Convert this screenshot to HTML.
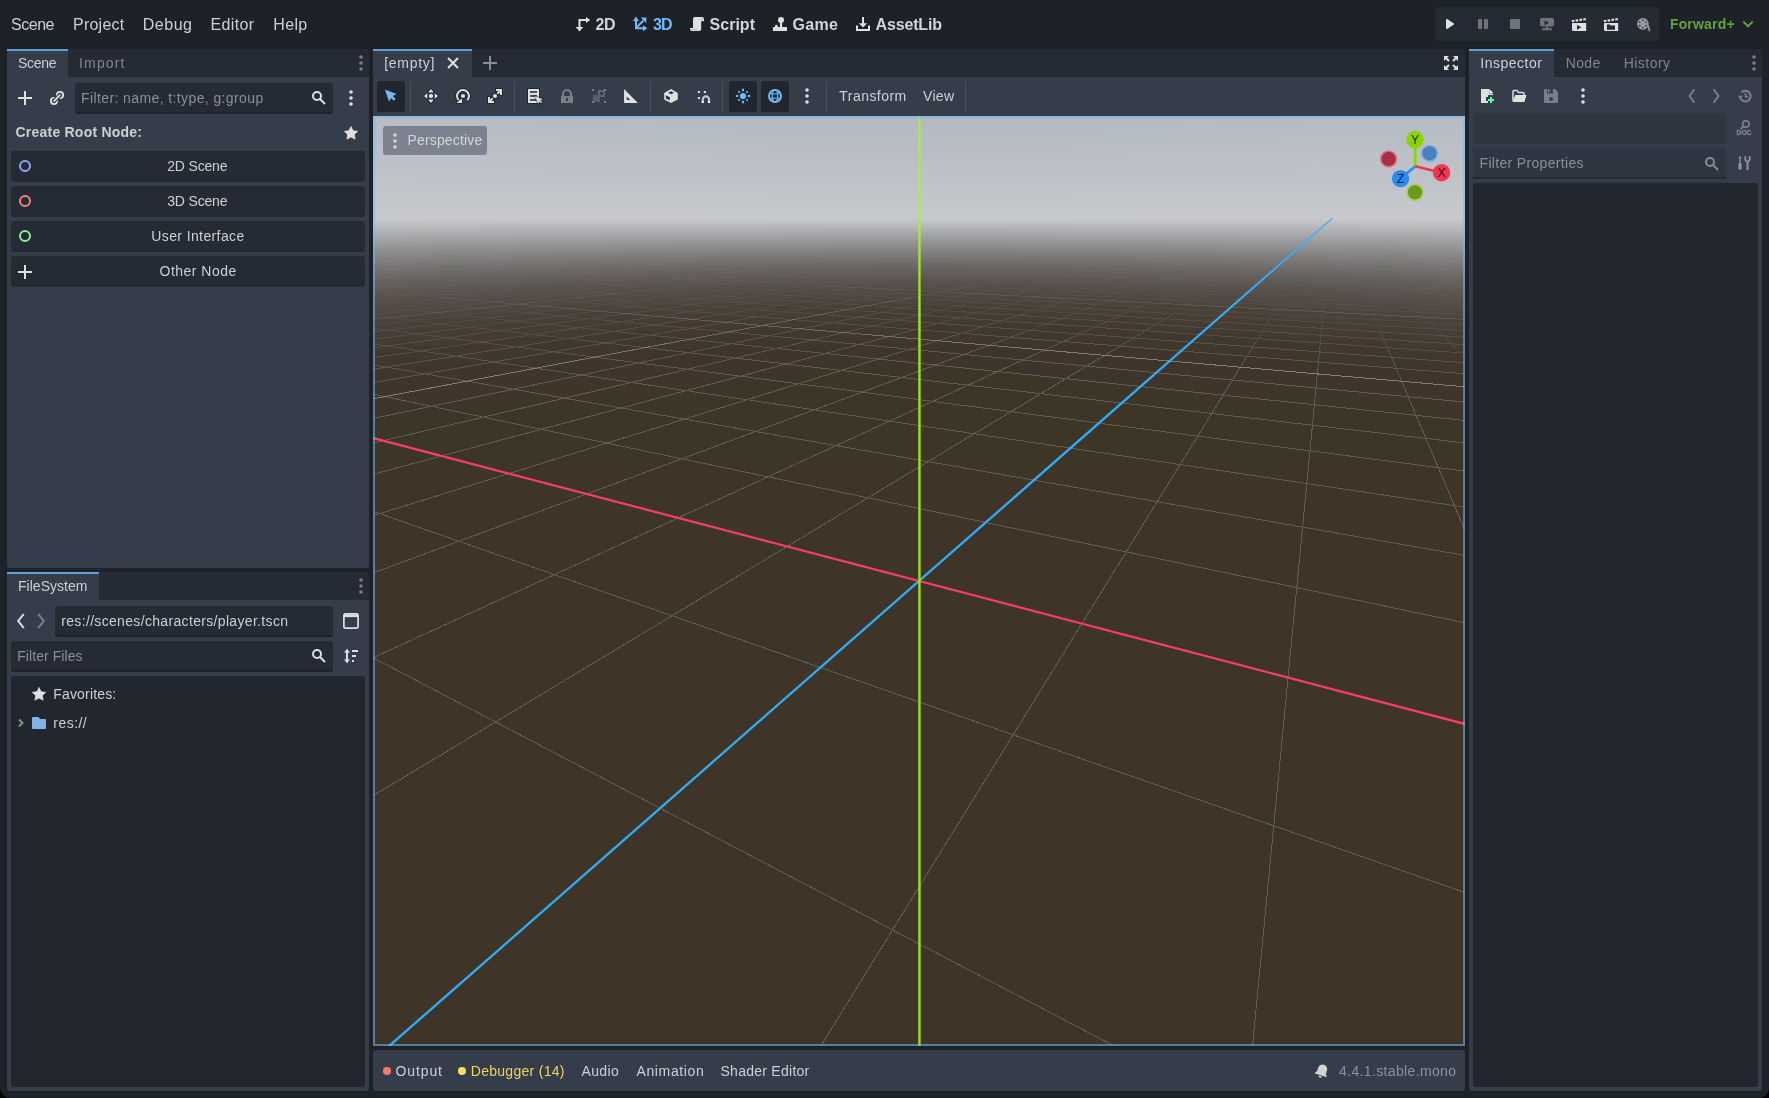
<!DOCTYPE html>
<html lang="en"><head><meta charset="utf-8"><title>Godot Engine</title>
<style>
*{margin:0;padding:0;box-sizing:border-box}
html{width:1769px;height:1098px;overflow:hidden;background:#000}
body{width:1769px;height:1098px;overflow:hidden;background:#1d2229;border-radius:0 0 10px 10px}
body{position:relative;font-family:"Liberation Sans",sans-serif;font-size:14px;color:#cdcfd2}
.a{position:absolute}
.t{position:absolute;white-space:pre}
.tb{position:absolute;background:#252b34;border-radius:3px 3px 0 0;height:28px}
.tab{position:absolute;top:0;height:28px;background:#363d4a;border-top:2px solid #5fa0da}
.pn{position:absolute;background:#363d4a}
.le{position:absolute;background:#252b34;border-radius:3px 3px 2px 2px;border-bottom:2px solid #1e232b}
.bt{position:absolute;background:#252b34;border-radius:3px}
.tree{position:absolute;background:#21262f;border-radius:3px}
.sep{position:absolute;width:1px;background:#4b515e;top:81px;height:31px}
svg.i{position:absolute;width:16px;height:16px;overflow:visible}
svg.vp{position:absolute;left:0;top:0}
#txt{position:absolute;left:0;top:0;width:1769px;height:1098px;will-change:transform}
</style></head>
<body>
<div class="tb" style="left:7px;top:49px;width:362px"><div class="tab" style="left:0;width:61px"></div></div>
<div class="pn" style="left:7px;top:77px;width:362px;height:491px;border-radius:0 0 3px 3px"></div>
<div class="le" style="left:75px;top:83px;width:258px;height:31px"></div>
<div class="bt" style="left:11px;top:151px;width:354px;height:31px"></div>
<div class="bt" style="left:11px;top:186px;width:354px;height:31px"></div>
<div class="bt" style="left:11px;top:221px;width:354px;height:31px"></div>
<div class="bt" style="left:11px;top:256px;width:354px;height:31px"></div>
<div class="tb" style="left:7px;top:572px;width:362px"><div class="tab" style="left:0;width:92px"></div></div>
<div class="pn" style="left:7px;top:600px;width:362px;height:491px;border-radius:0 0 3px 3px"></div>
<div class="le" style="left:55px;top:606px;width:278px;height:31px"></div>
<div class="le" style="left:11px;top:641px;width:322px;height:31px"></div>
<div class="tree" style="left:11px;top:676px;width:354px;height:411px"></div>
<div class="tb" style="left:373px;top:49px;width:1092px"><div class="tab" style="left:0;width:99px"></div></div>
<div class="pn" style="left:373px;top:77px;width:1092px;height:39px"></div>
<div class="bt" style="left:377px;top:81px;width:28px;height:31px;background:#21262f"></div>
<div class="bt" style="left:729px;top:81px;width:28px;height:31px;background:#21262f"></div>
<div class="bt" style="left:761px;top:81px;width:28px;height:31px;background:#21262f"></div>
<div class="sep" style="left:410px"></div>
<div class="sep" style="left:514px"></div>
<div class="sep" style="left:650px"></div>
<div class="sep" style="left:722px"></div>
<div class="sep" style="left:826px"></div>
<div class="sep" style="left:965px"></div>
<div class="a" id="vp" style="left:373px;top:116px;width:1092px;height:930px;overflow:hidden"><svg class="vp" width="1092" height="930" viewBox="0 0 1092 930">
<defs><linearGradient id="s0" gradientUnits="userSpaceOnUse" x1="0" y1="0.7" x2="0" y2="350.7"><stop offset="0.0000" stop-color="#b7bcc4"/><stop offset="0.0429" stop-color="#b9bec5"/><stop offset="0.0857" stop-color="#bbc0c6"/><stop offset="0.1286" stop-color="#bec1c7"/><stop offset="0.1714" stop-color="#c0c3c9"/><stop offset="0.2143" stop-color="#c2c5ca"/><stop offset="0.2514" stop-color="#c4c7cb"/><stop offset="0.2743" stop-color="#c6c8cc"/><stop offset="0.2857" stop-color="#c6c9cc"/><stop offset="0.2914" stop-color="#c7c9cc"/><stop offset="0.2943" stop-color="#c5c7cb"/><stop offset="0.2971" stop-color="#c4c6c9"/><stop offset="0.3029" stop-color="#c0c2c5"/><stop offset="0.3086" stop-color="#bdbfc2"/><stop offset="0.3171" stop-color="#b8b9bc"/><stop offset="0.3257" stop-color="#b3b4b7"/><stop offset="0.3371" stop-color="#acadb0"/><stop offset="0.3486" stop-color="#a5a6a8"/><stop offset="0.3629" stop-color="#9d9d9f"/><stop offset="0.3771" stop-color="#959596"/><stop offset="0.3943" stop-color="#8c8b8c"/><stop offset="0.4114" stop-color="#838282"/><stop offset="0.4343" stop-color="#787675"/><stop offset="0.4571" stop-color="#6f6c69"/><stop offset="0.4857" stop-color="#64605d"/><stop offset="0.5143" stop-color="#5c5652"/><stop offset="0.5486" stop-color="#534d47"/><stop offset="0.5886" stop-color="#4c453d"/><stop offset="0.6343" stop-color="#473e35"/><stop offset="0.6857" stop-color="#433a30"/><stop offset="0.7571" stop-color="#40362b"/><stop offset="0.8571" stop-color="#3f3429"/><stop offset="1.0000" stop-color="#3e3428"/></linearGradient><linearGradient id="s1" gradientUnits="userSpaceOnUse" x1="0" y1="0.7" x2="0" y2="350.7"><stop offset="0.0000" stop-color="#b7bcc4"/><stop offset="0.0429" stop-color="#b9bec5"/><stop offset="0.0857" stop-color="#bbbfc6"/><stop offset="0.1286" stop-color="#bdc1c7"/><stop offset="0.1714" stop-color="#c0c3c9"/><stop offset="0.2143" stop-color="#c2c5ca"/><stop offset="0.2514" stop-color="#c4c7cb"/><stop offset="0.2743" stop-color="#c6c8cc"/><stop offset="0.2857" stop-color="#c6c9cc"/><stop offset="0.2914" stop-color="#c7c9cc"/><stop offset="0.2943" stop-color="#c5c7cb"/><stop offset="0.2971" stop-color="#c4c6c9"/><stop offset="0.3029" stop-color="#c0c2c5"/><stop offset="0.3086" stop-color="#bdbfc2"/><stop offset="0.3171" stop-color="#b8b9bc"/><stop offset="0.3257" stop-color="#b2b4b6"/><stop offset="0.3371" stop-color="#abadaf"/><stop offset="0.3486" stop-color="#a5a5a8"/><stop offset="0.3629" stop-color="#9c9d9e"/><stop offset="0.3771" stop-color="#949495"/><stop offset="0.3943" stop-color="#8b8a8b"/><stop offset="0.4114" stop-color="#828180"/><stop offset="0.4343" stop-color="#777574"/><stop offset="0.4571" stop-color="#6d6a68"/><stop offset="0.4857" stop-color="#635f5b"/><stop offset="0.5143" stop-color="#5a5550"/><stop offset="0.5486" stop-color="#524c45"/><stop offset="0.5886" stop-color="#4b443c"/><stop offset="0.6343" stop-color="#463d34"/><stop offset="0.6857" stop-color="#42392f"/><stop offset="0.7571" stop-color="#40362b"/><stop offset="0.8571" stop-color="#3f3429"/><stop offset="1.0000" stop-color="#3e3428"/></linearGradient><linearGradient id="s2" gradientUnits="userSpaceOnUse" x1="0" y1="0.7" x2="0" y2="350.7"><stop offset="0.0000" stop-color="#b6bcc4"/><stop offset="0.0429" stop-color="#b9bec5"/><stop offset="0.0857" stop-color="#bbbfc6"/><stop offset="0.1286" stop-color="#bdc1c7"/><stop offset="0.1714" stop-color="#c0c3c9"/><stop offset="0.2143" stop-color="#c2c5ca"/><stop offset="0.2514" stop-color="#c4c7cb"/><stop offset="0.2743" stop-color="#c6c8cc"/><stop offset="0.2857" stop-color="#c6c9cc"/><stop offset="0.2914" stop-color="#c7c9cc"/><stop offset="0.2943" stop-color="#c5c7cb"/><stop offset="0.2971" stop-color="#c4c6c9"/><stop offset="0.3029" stop-color="#c0c2c5"/><stop offset="0.3086" stop-color="#bdbec1"/><stop offset="0.3171" stop-color="#b7b9bc"/><stop offset="0.3257" stop-color="#b2b3b6"/><stop offset="0.3371" stop-color="#abacae"/><stop offset="0.3486" stop-color="#a4a5a7"/><stop offset="0.3629" stop-color="#9b9c9d"/><stop offset="0.3771" stop-color="#939394"/><stop offset="0.3943" stop-color="#8a8989"/><stop offset="0.4114" stop-color="#817f7f"/><stop offset="0.4343" stop-color="#767472"/><stop offset="0.4571" stop-color="#6c6967"/><stop offset="0.4857" stop-color="#625d5a"/><stop offset="0.5143" stop-color="#59544f"/><stop offset="0.5486" stop-color="#514b44"/><stop offset="0.5886" stop-color="#4b433b"/><stop offset="0.6343" stop-color="#463d33"/><stop offset="0.6857" stop-color="#42392e"/><stop offset="0.7571" stop-color="#40362b"/><stop offset="0.8571" stop-color="#3f3429"/><stop offset="1.0000" stop-color="#3e3428"/></linearGradient><linearGradient id="s3" gradientUnits="userSpaceOnUse" x1="0" y1="0.7" x2="0" y2="350.7"><stop offset="0.0000" stop-color="#b6bcc4"/><stop offset="0.0429" stop-color="#b8bdc5"/><stop offset="0.0857" stop-color="#bbbfc6"/><stop offset="0.1286" stop-color="#bdc1c7"/><stop offset="0.1714" stop-color="#c0c3c8"/><stop offset="0.2143" stop-color="#c2c5ca"/><stop offset="0.2514" stop-color="#c4c7cb"/><stop offset="0.2743" stop-color="#c6c8cc"/><stop offset="0.2857" stop-color="#c6c9cc"/><stop offset="0.2914" stop-color="#c7c9cc"/><stop offset="0.2943" stop-color="#c5c7cb"/><stop offset="0.2971" stop-color="#c4c6c9"/><stop offset="0.3029" stop-color="#c0c2c5"/><stop offset="0.3086" stop-color="#bcbec1"/><stop offset="0.3171" stop-color="#b7b9bb"/><stop offset="0.3257" stop-color="#b2b3b6"/><stop offset="0.3371" stop-color="#aaacae"/><stop offset="0.3486" stop-color="#a3a4a6"/><stop offset="0.3629" stop-color="#9b9b9d"/><stop offset="0.3771" stop-color="#929293"/><stop offset="0.3943" stop-color="#898888"/><stop offset="0.4114" stop-color="#807e7e"/><stop offset="0.4343" stop-color="#757271"/><stop offset="0.4571" stop-color="#6b6865"/><stop offset="0.4857" stop-color="#615c58"/><stop offset="0.5143" stop-color="#58534d"/><stop offset="0.5486" stop-color="#504943"/><stop offset="0.5886" stop-color="#4a423a"/><stop offset="0.6343" stop-color="#453c33"/><stop offset="0.6857" stop-color="#42382e"/><stop offset="0.7571" stop-color="#40352a"/><stop offset="0.8571" stop-color="#3e3429"/><stop offset="1.0000" stop-color="#3e3428"/></linearGradient><linearGradient id="s4" gradientUnits="userSpaceOnUse" x1="0" y1="0.7" x2="0" y2="350.7"><stop offset="0.0000" stop-color="#b6bbc4"/><stop offset="0.0429" stop-color="#b8bdc5"/><stop offset="0.0857" stop-color="#babfc6"/><stop offset="0.1286" stop-color="#bdc1c7"/><stop offset="0.1714" stop-color="#bfc3c8"/><stop offset="0.2143" stop-color="#c2c5ca"/><stop offset="0.2514" stop-color="#c4c7cb"/><stop offset="0.2743" stop-color="#c6c8cc"/><stop offset="0.2857" stop-color="#c6c9cc"/><stop offset="0.2914" stop-color="#c7c9cc"/><stop offset="0.2943" stop-color="#c5c7cb"/><stop offset="0.2971" stop-color="#c4c6c9"/><stop offset="0.3029" stop-color="#c0c2c5"/><stop offset="0.3086" stop-color="#bcbec1"/><stop offset="0.3171" stop-color="#b7b8bb"/><stop offset="0.3257" stop-color="#b1b3b5"/><stop offset="0.3371" stop-color="#aaabad"/><stop offset="0.3486" stop-color="#a3a3a6"/><stop offset="0.3629" stop-color="#9a9a9c"/><stop offset="0.3771" stop-color="#919192"/><stop offset="0.3943" stop-color="#888787"/><stop offset="0.4114" stop-color="#7f7d7d"/><stop offset="0.4343" stop-color="#747170"/><stop offset="0.4571" stop-color="#6a6664"/><stop offset="0.4857" stop-color="#605b57"/><stop offset="0.5143" stop-color="#57514c"/><stop offset="0.5486" stop-color="#504842"/><stop offset="0.5886" stop-color="#494139"/><stop offset="0.6343" stop-color="#443b32"/><stop offset="0.6857" stop-color="#41382d"/><stop offset="0.7571" stop-color="#3f352a"/><stop offset="0.8571" stop-color="#3e3428"/><stop offset="1.0000" stop-color="#3e3428"/></linearGradient><linearGradient id="s5" gradientUnits="userSpaceOnUse" x1="0" y1="0.7" x2="0" y2="350.7"><stop offset="0.0000" stop-color="#b6bbc4"/><stop offset="0.0429" stop-color="#b8bdc5"/><stop offset="0.0857" stop-color="#babfc6"/><stop offset="0.1286" stop-color="#bdc1c7"/><stop offset="0.1714" stop-color="#bfc3c8"/><stop offset="0.2143" stop-color="#c2c5ca"/><stop offset="0.2514" stop-color="#c4c7cb"/><stop offset="0.2743" stop-color="#c6c8cc"/><stop offset="0.2857" stop-color="#c6c9cc"/><stop offset="0.2914" stop-color="#c7c9cc"/><stop offset="0.2943" stop-color="#c5c7cb"/><stop offset="0.2971" stop-color="#c3c5c9"/><stop offset="0.3029" stop-color="#c0c2c5"/><stop offset="0.3086" stop-color="#bcbec1"/><stop offset="0.3171" stop-color="#b6b8bb"/><stop offset="0.3257" stop-color="#b1b2b5"/><stop offset="0.3371" stop-color="#a9aaad"/><stop offset="0.3486" stop-color="#a2a3a5"/><stop offset="0.3629" stop-color="#99999b"/><stop offset="0.3771" stop-color="#919091"/><stop offset="0.3943" stop-color="#878686"/><stop offset="0.4114" stop-color="#7e7c7b"/><stop offset="0.4343" stop-color="#72706e"/><stop offset="0.4571" stop-color="#696562"/><stop offset="0.4857" stop-color="#5e5a55"/><stop offset="0.5143" stop-color="#56504b"/><stop offset="0.5486" stop-color="#4f4740"/><stop offset="0.5886" stop-color="#494038"/><stop offset="0.6343" stop-color="#443b31"/><stop offset="0.6857" stop-color="#41372d"/><stop offset="0.7571" stop-color="#3f352a"/><stop offset="0.8571" stop-color="#3e3428"/><stop offset="1.0000" stop-color="#3e3428"/></linearGradient><linearGradient id="s6" gradientUnits="userSpaceOnUse" x1="0" y1="0.7" x2="0" y2="350.7"><stop offset="0.0000" stop-color="#b5bbc4"/><stop offset="0.0429" stop-color="#b8bdc5"/><stop offset="0.0857" stop-color="#babfc6"/><stop offset="0.1286" stop-color="#bdc1c7"/><stop offset="0.1714" stop-color="#bfc3c8"/><stop offset="0.2143" stop-color="#c2c5ca"/><stop offset="0.2514" stop-color="#c4c7cb"/><stop offset="0.2743" stop-color="#c6c8cc"/><stop offset="0.2857" stop-color="#c6c9cc"/><stop offset="0.2914" stop-color="#c7c9cc"/><stop offset="0.2943" stop-color="#c5c7cb"/><stop offset="0.2971" stop-color="#c3c5c9"/><stop offset="0.3029" stop-color="#c0c2c5"/><stop offset="0.3086" stop-color="#bcbec1"/><stop offset="0.3171" stop-color="#b6b8bb"/><stop offset="0.3257" stop-color="#b0b2b4"/><stop offset="0.3371" stop-color="#a9aaac"/><stop offset="0.3486" stop-color="#a2a2a4"/><stop offset="0.3629" stop-color="#98999a"/><stop offset="0.3771" stop-color="#908f90"/><stop offset="0.3943" stop-color="#868585"/><stop offset="0.4114" stop-color="#7d7b7a"/><stop offset="0.4343" stop-color="#716f6d"/><stop offset="0.4571" stop-color="#686461"/><stop offset="0.4857" stop-color="#5d5854"/><stop offset="0.5143" stop-color="#554f49"/><stop offset="0.5486" stop-color="#4e473f"/><stop offset="0.5886" stop-color="#483f37"/><stop offset="0.6343" stop-color="#443a31"/><stop offset="0.6857" stop-color="#41372c"/><stop offset="0.7571" stop-color="#3f352a"/><stop offset="0.8571" stop-color="#3e3428"/><stop offset="1.0000" stop-color="#3e3428"/></linearGradient><linearGradient id="s7" gradientUnits="userSpaceOnUse" x1="0" y1="0.7" x2="0" y2="350.7"><stop offset="0.0000" stop-color="#b5bbc4"/><stop offset="0.0429" stop-color="#b7bdc5"/><stop offset="0.0857" stop-color="#babfc6"/><stop offset="0.1286" stop-color="#bcc1c7"/><stop offset="0.1714" stop-color="#bfc3c8"/><stop offset="0.2143" stop-color="#c2c5ca"/><stop offset="0.2514" stop-color="#c4c7cb"/><stop offset="0.2743" stop-color="#c6c8cc"/><stop offset="0.2857" stop-color="#c6c9cc"/><stop offset="0.2914" stop-color="#c7c9cc"/><stop offset="0.2943" stop-color="#c5c7cb"/><stop offset="0.2971" stop-color="#c3c5c9"/><stop offset="0.3029" stop-color="#bfc1c4"/><stop offset="0.3086" stop-color="#bcbdc0"/><stop offset="0.3171" stop-color="#b6b7ba"/><stop offset="0.3257" stop-color="#b0b1b4"/><stop offset="0.3371" stop-color="#a8a9ac"/><stop offset="0.3486" stop-color="#a1a2a4"/><stop offset="0.3629" stop-color="#989899"/><stop offset="0.3771" stop-color="#8f8f8f"/><stop offset="0.3943" stop-color="#858484"/><stop offset="0.4114" stop-color="#7c7a79"/><stop offset="0.4343" stop-color="#706d6c"/><stop offset="0.4571" stop-color="#676360"/><stop offset="0.4857" stop-color="#5c5753"/><stop offset="0.5143" stop-color="#544e48"/><stop offset="0.5486" stop-color="#4d463e"/><stop offset="0.5886" stop-color="#473f36"/><stop offset="0.6343" stop-color="#433a30"/><stop offset="0.6857" stop-color="#41372c"/><stop offset="0.7571" stop-color="#3f3529"/><stop offset="0.8571" stop-color="#3e3428"/><stop offset="1.0000" stop-color="#3e3428"/></linearGradient><linearGradient id="s8" gradientUnits="userSpaceOnUse" x1="0" y1="0.7" x2="0" y2="350.7"><stop offset="0.0000" stop-color="#b5bbc3"/><stop offset="0.0429" stop-color="#b7bdc5"/><stop offset="0.0857" stop-color="#babec6"/><stop offset="0.1286" stop-color="#bcc0c7"/><stop offset="0.1714" stop-color="#bfc3c8"/><stop offset="0.2143" stop-color="#c2c5ca"/><stop offset="0.2514" stop-color="#c4c7cb"/><stop offset="0.2743" stop-color="#c6c8cb"/><stop offset="0.2857" stop-color="#c6c9cc"/><stop offset="0.2914" stop-color="#c7c9cc"/><stop offset="0.2943" stop-color="#c5c7ca"/><stop offset="0.2971" stop-color="#c3c5c8"/><stop offset="0.3029" stop-color="#bfc1c4"/><stop offset="0.3086" stop-color="#bbbdc0"/><stop offset="0.3171" stop-color="#b6b7ba"/><stop offset="0.3257" stop-color="#b0b1b4"/><stop offset="0.3371" stop-color="#a8a9ab"/><stop offset="0.3486" stop-color="#a0a1a3"/><stop offset="0.3629" stop-color="#979799"/><stop offset="0.3771" stop-color="#8e8e8f"/><stop offset="0.3943" stop-color="#848383"/><stop offset="0.4114" stop-color="#7b7978"/><stop offset="0.4343" stop-color="#6f6c6a"/><stop offset="0.4571" stop-color="#66615e"/><stop offset="0.4857" stop-color="#5b5651"/><stop offset="0.5143" stop-color="#534d47"/><stop offset="0.5486" stop-color="#4c453d"/><stop offset="0.5886" stop-color="#473e35"/><stop offset="0.6343" stop-color="#43392f"/><stop offset="0.6857" stop-color="#40372c"/><stop offset="0.7571" stop-color="#3f3529"/><stop offset="0.8571" stop-color="#3e3428"/><stop offset="1.0000" stop-color="#3e3428"/></linearGradient><linearGradient id="s9" gradientUnits="userSpaceOnUse" x1="0" y1="0.7" x2="0" y2="350.7"><stop offset="0.0000" stop-color="#b5bac3"/><stop offset="0.0429" stop-color="#b7bcc4"/><stop offset="0.0857" stop-color="#babec6"/><stop offset="0.1286" stop-color="#bcc0c7"/><stop offset="0.1714" stop-color="#bfc2c8"/><stop offset="0.2143" stop-color="#c2c5c9"/><stop offset="0.2514" stop-color="#c4c7cb"/><stop offset="0.2743" stop-color="#c6c8cb"/><stop offset="0.2857" stop-color="#c6c9cc"/><stop offset="0.2914" stop-color="#c7c9cc"/><stop offset="0.2943" stop-color="#c5c7ca"/><stop offset="0.2971" stop-color="#c3c5c8"/><stop offset="0.3029" stop-color="#bfc1c4"/><stop offset="0.3086" stop-color="#bbbdc0"/><stop offset="0.3171" stop-color="#b5b7ba"/><stop offset="0.3257" stop-color="#afb1b3"/><stop offset="0.3371" stop-color="#a8a9ab"/><stop offset="0.3486" stop-color="#a0a0a2"/><stop offset="0.3629" stop-color="#969698"/><stop offset="0.3771" stop-color="#8d8d8e"/><stop offset="0.3943" stop-color="#838282"/><stop offset="0.4114" stop-color="#7a7877"/><stop offset="0.4343" stop-color="#6e6b69"/><stop offset="0.4571" stop-color="#65605d"/><stop offset="0.4857" stop-color="#5a5550"/><stop offset="0.5143" stop-color="#534c46"/><stop offset="0.5486" stop-color="#4c443c"/><stop offset="0.5886" stop-color="#463e35"/><stop offset="0.6343" stop-color="#42392f"/><stop offset="0.6857" stop-color="#40362b"/><stop offset="0.7571" stop-color="#3f3529"/><stop offset="0.8571" stop-color="#3e3428"/><stop offset="1.0000" stop-color="#3e3428"/></linearGradient><linearGradient id="s10" gradientUnits="userSpaceOnUse" x1="0" y1="0.7" x2="0" y2="350.7"><stop offset="0.0000" stop-color="#b4bac3"/><stop offset="0.0429" stop-color="#b7bcc4"/><stop offset="0.0857" stop-color="#b9bec6"/><stop offset="0.1286" stop-color="#bcc0c7"/><stop offset="0.1714" stop-color="#bfc2c8"/><stop offset="0.2143" stop-color="#c2c5c9"/><stop offset="0.2514" stop-color="#c4c7cb"/><stop offset="0.2743" stop-color="#c6c8cb"/><stop offset="0.2857" stop-color="#c6c9cc"/><stop offset="0.2914" stop-color="#c7c9cc"/><stop offset="0.2943" stop-color="#c5c7ca"/><stop offset="0.2971" stop-color="#c3c5c8"/><stop offset="0.3029" stop-color="#bfc1c4"/><stop offset="0.3086" stop-color="#bbbdc0"/><stop offset="0.3171" stop-color="#b5b7b9"/><stop offset="0.3257" stop-color="#afb0b3"/><stop offset="0.3371" stop-color="#a7a8aa"/><stop offset="0.3486" stop-color="#9fa0a2"/><stop offset="0.3629" stop-color="#969697"/><stop offset="0.3771" stop-color="#8d8c8d"/><stop offset="0.3943" stop-color="#828181"/><stop offset="0.4114" stop-color="#797776"/><stop offset="0.4343" stop-color="#6d6a68"/><stop offset="0.4571" stop-color="#645f5c"/><stop offset="0.4857" stop-color="#5a544f"/><stop offset="0.5143" stop-color="#524b45"/><stop offset="0.5486" stop-color="#4b433b"/><stop offset="0.5886" stop-color="#463d34"/><stop offset="0.6343" stop-color="#42392e"/><stop offset="0.6857" stop-color="#40362b"/><stop offset="0.7571" stop-color="#3f3429"/><stop offset="0.8571" stop-color="#3e3428"/><stop offset="1.0000" stop-color="#3e3428"/></linearGradient><linearGradient id="s11" gradientUnits="userSpaceOnUse" x1="0" y1="0.7" x2="0" y2="350.7"><stop offset="0.0000" stop-color="#b4bac3"/><stop offset="0.0429" stop-color="#b7bcc4"/><stop offset="0.0857" stop-color="#b9bec5"/><stop offset="0.1286" stop-color="#bcc0c7"/><stop offset="0.1714" stop-color="#bfc2c8"/><stop offset="0.2143" stop-color="#c1c5c9"/><stop offset="0.2514" stop-color="#c4c7cb"/><stop offset="0.2743" stop-color="#c6c8cb"/><stop offset="0.2857" stop-color="#c6c9cc"/><stop offset="0.2914" stop-color="#c7c9cc"/><stop offset="0.2943" stop-color="#c5c7ca"/><stop offset="0.2971" stop-color="#c3c5c8"/><stop offset="0.3029" stop-color="#bfc1c4"/><stop offset="0.3086" stop-color="#bbbdc0"/><stop offset="0.3171" stop-color="#b5b6b9"/><stop offset="0.3257" stop-color="#afb0b3"/><stop offset="0.3371" stop-color="#a7a8aa"/><stop offset="0.3486" stop-color="#9f9fa1"/><stop offset="0.3629" stop-color="#959596"/><stop offset="0.3771" stop-color="#8c8b8c"/><stop offset="0.3943" stop-color="#818080"/><stop offset="0.4114" stop-color="#787675"/><stop offset="0.4343" stop-color="#6c6967"/><stop offset="0.4571" stop-color="#635e5b"/><stop offset="0.4857" stop-color="#59534e"/><stop offset="0.5143" stop-color="#514a44"/><stop offset="0.5486" stop-color="#4a433b"/><stop offset="0.5886" stop-color="#453c33"/><stop offset="0.6343" stop-color="#42382e"/><stop offset="0.6857" stop-color="#40362b"/><stop offset="0.7571" stop-color="#3f3429"/><stop offset="0.8571" stop-color="#3e3428"/><stop offset="1.0000" stop-color="#3e3428"/></linearGradient><linearGradient id="s12" gradientUnits="userSpaceOnUse" x1="0" y1="0.7" x2="0" y2="350.7"><stop offset="0.0000" stop-color="#b4bac3"/><stop offset="0.0429" stop-color="#b6bcc4"/><stop offset="0.0857" stop-color="#b9bec5"/><stop offset="0.1286" stop-color="#bcc0c7"/><stop offset="0.1714" stop-color="#bfc2c8"/><stop offset="0.2143" stop-color="#c1c5c9"/><stop offset="0.2514" stop-color="#c4c7cb"/><stop offset="0.2743" stop-color="#c6c8cb"/><stop offset="0.2857" stop-color="#c6c9cc"/><stop offset="0.2914" stop-color="#c7c9cc"/><stop offset="0.2943" stop-color="#c5c7ca"/><stop offset="0.2971" stop-color="#c3c5c8"/><stop offset="0.3029" stop-color="#bfc1c4"/><stop offset="0.3086" stop-color="#bbbdc0"/><stop offset="0.3171" stop-color="#b5b6b9"/><stop offset="0.3257" stop-color="#aeb0b2"/><stop offset="0.3371" stop-color="#a6a7a9"/><stop offset="0.3486" stop-color="#9e9fa1"/><stop offset="0.3629" stop-color="#949496"/><stop offset="0.3771" stop-color="#8b8b8b"/><stop offset="0.3943" stop-color="#817f7f"/><stop offset="0.4114" stop-color="#777574"/><stop offset="0.4343" stop-color="#6c6866"/><stop offset="0.4571" stop-color="#625d5a"/><stop offset="0.4857" stop-color="#58524d"/><stop offset="0.5143" stop-color="#504a43"/><stop offset="0.5486" stop-color="#4a423a"/><stop offset="0.5886" stop-color="#453c33"/><stop offset="0.6343" stop-color="#42382e"/><stop offset="0.6857" stop-color="#40362b"/><stop offset="0.7571" stop-color="#3f3429"/><stop offset="0.8571" stop-color="#3e3428"/><stop offset="1.0000" stop-color="#3e3428"/></linearGradient><linearGradient id="s13" gradientUnits="userSpaceOnUse" x1="0" y1="0.7" x2="0" y2="350.7"><stop offset="0.0000" stop-color="#b4bac3"/><stop offset="0.0429" stop-color="#b6bcc4"/><stop offset="0.0857" stop-color="#b9bec5"/><stop offset="0.1286" stop-color="#bcc0c7"/><stop offset="0.1714" stop-color="#bec2c8"/><stop offset="0.2143" stop-color="#c1c4c9"/><stop offset="0.2514" stop-color="#c4c7cb"/><stop offset="0.2743" stop-color="#c6c8cb"/><stop offset="0.2857" stop-color="#c6c9cc"/><stop offset="0.2914" stop-color="#c7c9cc"/><stop offset="0.2943" stop-color="#c5c7ca"/><stop offset="0.2971" stop-color="#c3c5c8"/><stop offset="0.3029" stop-color="#bfc1c4"/><stop offset="0.3086" stop-color="#bbbcbf"/><stop offset="0.3171" stop-color="#b4b6b9"/><stop offset="0.3257" stop-color="#aeafb2"/><stop offset="0.3371" stop-color="#a6a7a9"/><stop offset="0.3486" stop-color="#9e9ea0"/><stop offset="0.3629" stop-color="#949495"/><stop offset="0.3771" stop-color="#8b8a8a"/><stop offset="0.3943" stop-color="#807e7e"/><stop offset="0.4114" stop-color="#767473"/><stop offset="0.4343" stop-color="#6b6765"/><stop offset="0.4571" stop-color="#615d59"/><stop offset="0.4857" stop-color="#57514c"/><stop offset="0.5143" stop-color="#504942"/><stop offset="0.5486" stop-color="#494139"/><stop offset="0.5886" stop-color="#453c32"/><stop offset="0.6343" stop-color="#41382d"/><stop offset="0.6857" stop-color="#40362a"/><stop offset="0.7571" stop-color="#3f3429"/><stop offset="0.8571" stop-color="#3e3428"/><stop offset="1.0000" stop-color="#3e3428"/></linearGradient><linearGradient id="s14" gradientUnits="userSpaceOnUse" x1="0" y1="0.7" x2="0" y2="350.7"><stop offset="0.0000" stop-color="#b4bac3"/><stop offset="0.0429" stop-color="#b6bcc4"/><stop offset="0.0857" stop-color="#b9bec5"/><stop offset="0.1286" stop-color="#bcc0c7"/><stop offset="0.1714" stop-color="#bec2c8"/><stop offset="0.2143" stop-color="#c1c4c9"/><stop offset="0.2514" stop-color="#c4c7cb"/><stop offset="0.2743" stop-color="#c6c8cb"/><stop offset="0.2857" stop-color="#c6c9cc"/><stop offset="0.2914" stop-color="#c7c9cc"/><stop offset="0.2943" stop-color="#c5c7ca"/><stop offset="0.2971" stop-color="#c3c5c8"/><stop offset="0.3029" stop-color="#bfc1c4"/><stop offset="0.3086" stop-color="#bbbcbf"/><stop offset="0.3171" stop-color="#b4b6b9"/><stop offset="0.3257" stop-color="#aeafb2"/><stop offset="0.3371" stop-color="#a6a6a9"/><stop offset="0.3486" stop-color="#9d9ea0"/><stop offset="0.3629" stop-color="#939395"/><stop offset="0.3771" stop-color="#8a898a"/><stop offset="0.3943" stop-color="#7f7e7d"/><stop offset="0.4114" stop-color="#767372"/><stop offset="0.4343" stop-color="#6a6764"/><stop offset="0.4571" stop-color="#605c58"/><stop offset="0.4857" stop-color="#57514b"/><stop offset="0.5143" stop-color="#4f4841"/><stop offset="0.5486" stop-color="#494139"/><stop offset="0.5886" stop-color="#443b32"/><stop offset="0.6343" stop-color="#41382d"/><stop offset="0.6857" stop-color="#40352a"/><stop offset="0.7571" stop-color="#3f3429"/><stop offset="0.8571" stop-color="#3e3428"/><stop offset="1.0000" stop-color="#3e3428"/></linearGradient><linearGradient id="s15" gradientUnits="userSpaceOnUse" x1="0" y1="0.7" x2="0" y2="350.7"><stop offset="0.0000" stop-color="#b3bac3"/><stop offset="0.0429" stop-color="#b6bcc4"/><stop offset="0.0857" stop-color="#b9bec5"/><stop offset="0.1286" stop-color="#bbc0c6"/><stop offset="0.1714" stop-color="#bec2c8"/><stop offset="0.2143" stop-color="#c1c4c9"/><stop offset="0.2514" stop-color="#c4c7cb"/><stop offset="0.2743" stop-color="#c5c8cb"/><stop offset="0.2857" stop-color="#c6c9cc"/><stop offset="0.2914" stop-color="#c7c9cc"/><stop offset="0.2943" stop-color="#c5c7ca"/><stop offset="0.2971" stop-color="#c3c5c8"/><stop offset="0.3029" stop-color="#bfc1c4"/><stop offset="0.3086" stop-color="#babcbf"/><stop offset="0.3171" stop-color="#b4b6b8"/><stop offset="0.3257" stop-color="#aeafb1"/><stop offset="0.3371" stop-color="#a5a6a8"/><stop offset="0.3486" stop-color="#9d9d9f"/><stop offset="0.3629" stop-color="#939394"/><stop offset="0.3771" stop-color="#898989"/><stop offset="0.3943" stop-color="#7f7d7d"/><stop offset="0.4114" stop-color="#757271"/><stop offset="0.4343" stop-color="#696663"/><stop offset="0.4571" stop-color="#605b57"/><stop offset="0.4857" stop-color="#56504a"/><stop offset="0.5143" stop-color="#4f4841"/><stop offset="0.5486" stop-color="#494038"/><stop offset="0.5886" stop-color="#443b31"/><stop offset="0.6343" stop-color="#41372d"/><stop offset="0.6857" stop-color="#3f352a"/><stop offset="0.7571" stop-color="#3e3429"/><stop offset="0.8571" stop-color="#3e3428"/><stop offset="1.0000" stop-color="#3e3428"/></linearGradient><linearGradient id="s16" gradientUnits="userSpaceOnUse" x1="0" y1="0.7" x2="0" y2="350.7"><stop offset="0.0000" stop-color="#b3b9c3"/><stop offset="0.0429" stop-color="#b6bbc4"/><stop offset="0.0857" stop-color="#b9bec5"/><stop offset="0.1286" stop-color="#bbc0c6"/><stop offset="0.1714" stop-color="#bec2c8"/><stop offset="0.2143" stop-color="#c1c4c9"/><stop offset="0.2514" stop-color="#c4c6cb"/><stop offset="0.2743" stop-color="#c5c8cb"/><stop offset="0.2857" stop-color="#c6c8cc"/><stop offset="0.2914" stop-color="#c7c9cc"/><stop offset="0.2943" stop-color="#c5c7ca"/><stop offset="0.2971" stop-color="#c3c5c8"/><stop offset="0.3029" stop-color="#bfc1c4"/><stop offset="0.3086" stop-color="#babcbf"/><stop offset="0.3171" stop-color="#b4b5b8"/><stop offset="0.3257" stop-color="#adafb1"/><stop offset="0.3371" stop-color="#a5a6a8"/><stop offset="0.3486" stop-color="#9d9d9f"/><stop offset="0.3629" stop-color="#939294"/><stop offset="0.3771" stop-color="#898889"/><stop offset="0.3943" stop-color="#7e7d7c"/><stop offset="0.4114" stop-color="#747270"/><stop offset="0.4343" stop-color="#696562"/><stop offset="0.4571" stop-color="#5f5a56"/><stop offset="0.4857" stop-color="#564f4a"/><stop offset="0.5143" stop-color="#4e4740"/><stop offset="0.5486" stop-color="#484038"/><stop offset="0.5886" stop-color="#443b31"/><stop offset="0.6343" stop-color="#41372d"/><stop offset="0.6857" stop-color="#3f352a"/><stop offset="0.7571" stop-color="#3e3429"/><stop offset="0.8571" stop-color="#3e3428"/><stop offset="1.0000" stop-color="#3e3428"/></linearGradient><linearGradient id="s17" gradientUnits="userSpaceOnUse" x1="0" y1="0.7" x2="0" y2="350.7"><stop offset="0.0000" stop-color="#b3b9c3"/><stop offset="0.0429" stop-color="#b6bbc4"/><stop offset="0.0857" stop-color="#b8bdc5"/><stop offset="0.1286" stop-color="#bbc0c6"/><stop offset="0.1714" stop-color="#bec2c8"/><stop offset="0.2143" stop-color="#c1c4c9"/><stop offset="0.2514" stop-color="#c4c6cb"/><stop offset="0.2743" stop-color="#c5c8cb"/><stop offset="0.2857" stop-color="#c6c8cc"/><stop offset="0.2914" stop-color="#c7c9cc"/><stop offset="0.2943" stop-color="#c5c7ca"/><stop offset="0.2971" stop-color="#c3c5c8"/><stop offset="0.3029" stop-color="#bfc0c4"/><stop offset="0.3086" stop-color="#babcbf"/><stop offset="0.3171" stop-color="#b4b5b8"/><stop offset="0.3257" stop-color="#adafb1"/><stop offset="0.3371" stop-color="#a5a6a8"/><stop offset="0.3486" stop-color="#9c9d9e"/><stop offset="0.3629" stop-color="#929293"/><stop offset="0.3771" stop-color="#898888"/><stop offset="0.3943" stop-color="#7e7c7c"/><stop offset="0.4114" stop-color="#747170"/><stop offset="0.4343" stop-color="#686562"/><stop offset="0.4571" stop-color="#5f5a56"/><stop offset="0.4857" stop-color="#554f49"/><stop offset="0.5143" stop-color="#4e4740"/><stop offset="0.5486" stop-color="#484037"/><stop offset="0.5886" stop-color="#443a31"/><stop offset="0.6343" stop-color="#41372c"/><stop offset="0.6857" stop-color="#3f352a"/><stop offset="0.7571" stop-color="#3e3429"/><stop offset="0.8571" stop-color="#3e3428"/><stop offset="1.0000" stop-color="#3e3428"/></linearGradient><linearGradient id="s18" gradientUnits="userSpaceOnUse" x1="0" y1="0.7" x2="0" y2="350.7"><stop offset="0.0000" stop-color="#b3b9c3"/><stop offset="0.0429" stop-color="#b6bbc4"/><stop offset="0.0857" stop-color="#b8bdc5"/><stop offset="0.1286" stop-color="#bbc0c6"/><stop offset="0.1714" stop-color="#bec2c8"/><stop offset="0.2143" stop-color="#c1c4c9"/><stop offset="0.2514" stop-color="#c4c6cb"/><stop offset="0.2743" stop-color="#c5c8cb"/><stop offset="0.2857" stop-color="#c6c8cc"/><stop offset="0.2914" stop-color="#c7c9cc"/><stop offset="0.2943" stop-color="#c5c7ca"/><stop offset="0.2971" stop-color="#c3c5c8"/><stop offset="0.3029" stop-color="#bfc0c3"/><stop offset="0.3086" stop-color="#babcbf"/><stop offset="0.3171" stop-color="#b4b5b8"/><stop offset="0.3257" stop-color="#adaeb1"/><stop offset="0.3371" stop-color="#a4a5a7"/><stop offset="0.3486" stop-color="#9c9c9e"/><stop offset="0.3629" stop-color="#929293"/><stop offset="0.3771" stop-color="#888788"/><stop offset="0.3943" stop-color="#7d7c7b"/><stop offset="0.4114" stop-color="#73716f"/><stop offset="0.4343" stop-color="#686461"/><stop offset="0.4571" stop-color="#5e5955"/><stop offset="0.4857" stop-color="#554f49"/><stop offset="0.5143" stop-color="#4e463f"/><stop offset="0.5486" stop-color="#483f37"/><stop offset="0.5886" stop-color="#433a30"/><stop offset="0.6343" stop-color="#41372c"/><stop offset="0.6857" stop-color="#3f352a"/><stop offset="0.7571" stop-color="#3e3428"/><stop offset="0.8571" stop-color="#3e3428"/><stop offset="1.0000" stop-color="#3e3428"/></linearGradient><linearGradient id="s19" gradientUnits="userSpaceOnUse" x1="0" y1="0.7" x2="0" y2="350.7"><stop offset="0.0000" stop-color="#b3b9c3"/><stop offset="0.0429" stop-color="#b6bbc4"/><stop offset="0.0857" stop-color="#b8bdc5"/><stop offset="0.1286" stop-color="#bbc0c6"/><stop offset="0.1714" stop-color="#bec2c8"/><stop offset="0.2143" stop-color="#c1c4c9"/><stop offset="0.2514" stop-color="#c4c6cb"/><stop offset="0.2743" stop-color="#c5c8cb"/><stop offset="0.2857" stop-color="#c6c8cc"/><stop offset="0.2914" stop-color="#c7c9cc"/><stop offset="0.2943" stop-color="#c5c7ca"/><stop offset="0.2971" stop-color="#c3c5c8"/><stop offset="0.3029" stop-color="#bec0c3"/><stop offset="0.3086" stop-color="#babcbf"/><stop offset="0.3171" stop-color="#b4b5b8"/><stop offset="0.3257" stop-color="#adaeb1"/><stop offset="0.3371" stop-color="#a4a5a7"/><stop offset="0.3486" stop-color="#9c9c9e"/><stop offset="0.3629" stop-color="#929192"/><stop offset="0.3771" stop-color="#888787"/><stop offset="0.3943" stop-color="#7d7b7b"/><stop offset="0.4114" stop-color="#73716f"/><stop offset="0.4343" stop-color="#686461"/><stop offset="0.4571" stop-color="#5e5955"/><stop offset="0.4857" stop-color="#554e48"/><stop offset="0.5143" stop-color="#4d463f"/><stop offset="0.5486" stop-color="#483f37"/><stop offset="0.5886" stop-color="#433a30"/><stop offset="0.6343" stop-color="#41372c"/><stop offset="0.6857" stop-color="#3f352a"/><stop offset="0.7571" stop-color="#3e3428"/><stop offset="0.8571" stop-color="#3e3428"/><stop offset="1.0000" stop-color="#3e3428"/></linearGradient><linearGradient id="s20" gradientUnits="userSpaceOnUse" x1="0" y1="0.7" x2="0" y2="350.7"><stop offset="0.0000" stop-color="#b3b9c3"/><stop offset="0.0429" stop-color="#b6bbc4"/><stop offset="0.0857" stop-color="#b8bdc5"/><stop offset="0.1286" stop-color="#bbc0c6"/><stop offset="0.1714" stop-color="#bec2c8"/><stop offset="0.2143" stop-color="#c1c4c9"/><stop offset="0.2514" stop-color="#c4c6cb"/><stop offset="0.2743" stop-color="#c5c8cb"/><stop offset="0.2857" stop-color="#c6c8cc"/><stop offset="0.2914" stop-color="#c7c9cc"/><stop offset="0.2943" stop-color="#c5c7ca"/><stop offset="0.2971" stop-color="#c3c5c8"/><stop offset="0.3029" stop-color="#bec0c3"/><stop offset="0.3086" stop-color="#babcbf"/><stop offset="0.3171" stop-color="#b3b5b8"/><stop offset="0.3257" stop-color="#adaeb1"/><stop offset="0.3371" stop-color="#a4a5a7"/><stop offset="0.3486" stop-color="#9c9c9e"/><stop offset="0.3629" stop-color="#919192"/><stop offset="0.3771" stop-color="#888787"/><stop offset="0.3943" stop-color="#7d7b7b"/><stop offset="0.4114" stop-color="#73706f"/><stop offset="0.4343" stop-color="#676461"/><stop offset="0.4571" stop-color="#5e5955"/><stop offset="0.4857" stop-color="#544e48"/><stop offset="0.5143" stop-color="#4d463f"/><stop offset="0.5486" stop-color="#473f36"/><stop offset="0.5886" stop-color="#433a30"/><stop offset="0.6343" stop-color="#41372c"/><stop offset="0.6857" stop-color="#3f352a"/><stop offset="0.7571" stop-color="#3e3428"/><stop offset="0.8571" stop-color="#3e3428"/><stop offset="1.0000" stop-color="#3e3428"/></linearGradient><linearGradient id="s21" gradientUnits="userSpaceOnUse" x1="0" y1="0.7" x2="0" y2="350.7"><stop offset="0.0000" stop-color="#b3b9c3"/><stop offset="0.0429" stop-color="#b6bbc4"/><stop offset="0.0857" stop-color="#b8bdc5"/><stop offset="0.1286" stop-color="#bbc0c6"/><stop offset="0.1714" stop-color="#bec2c8"/><stop offset="0.2143" stop-color="#c1c4c9"/><stop offset="0.2514" stop-color="#c4c6cb"/><stop offset="0.2743" stop-color="#c5c8cb"/><stop offset="0.2857" stop-color="#c6c8cc"/><stop offset="0.2914" stop-color="#c7c9cc"/><stop offset="0.2943" stop-color="#c5c7ca"/><stop offset="0.2971" stop-color="#c3c5c8"/><stop offset="0.3029" stop-color="#bec0c3"/><stop offset="0.3086" stop-color="#babcbf"/><stop offset="0.3171" stop-color="#b3b5b8"/><stop offset="0.3257" stop-color="#adaeb1"/><stop offset="0.3371" stop-color="#a4a5a7"/><stop offset="0.3486" stop-color="#9c9c9e"/><stop offset="0.3629" stop-color="#919192"/><stop offset="0.3771" stop-color="#888787"/><stop offset="0.3943" stop-color="#7d7b7a"/><stop offset="0.4114" stop-color="#73706f"/><stop offset="0.4343" stop-color="#676360"/><stop offset="0.4571" stop-color="#5e5954"/><stop offset="0.4857" stop-color="#544e48"/><stop offset="0.5143" stop-color="#4d463e"/><stop offset="0.5486" stop-color="#473f36"/><stop offset="0.5886" stop-color="#433a30"/><stop offset="0.6343" stop-color="#41372c"/><stop offset="0.6857" stop-color="#3f352a"/><stop offset="0.7571" stop-color="#3e3428"/><stop offset="0.8571" stop-color="#3e3428"/><stop offset="1.0000" stop-color="#3e3428"/></linearGradient><linearGradient id="s22" gradientUnits="userSpaceOnUse" x1="0" y1="0.7" x2="0" y2="350.7"><stop offset="0.0000" stop-color="#b3b9c3"/><stop offset="0.0429" stop-color="#b6bbc4"/><stop offset="0.0857" stop-color="#b8bdc5"/><stop offset="0.1286" stop-color="#bbc0c6"/><stop offset="0.1714" stop-color="#bec2c8"/><stop offset="0.2143" stop-color="#c1c4c9"/><stop offset="0.2514" stop-color="#c4c6cb"/><stop offset="0.2743" stop-color="#c5c8cb"/><stop offset="0.2857" stop-color="#c6c8cc"/><stop offset="0.2914" stop-color="#c7c9cc"/><stop offset="0.2943" stop-color="#c5c7ca"/><stop offset="0.2971" stop-color="#c3c5c8"/><stop offset="0.3029" stop-color="#bec0c3"/><stop offset="0.3086" stop-color="#babcbf"/><stop offset="0.3171" stop-color="#b3b5b8"/><stop offset="0.3257" stop-color="#adaeb1"/><stop offset="0.3371" stop-color="#a4a5a7"/><stop offset="0.3486" stop-color="#9c9c9e"/><stop offset="0.3629" stop-color="#919192"/><stop offset="0.3771" stop-color="#888787"/><stop offset="0.3943" stop-color="#7d7b7a"/><stop offset="0.4114" stop-color="#73706f"/><stop offset="0.4343" stop-color="#676360"/><stop offset="0.4571" stop-color="#5e5954"/><stop offset="0.4857" stop-color="#544e48"/><stop offset="0.5143" stop-color="#4d463e"/><stop offset="0.5486" stop-color="#473f36"/><stop offset="0.5886" stop-color="#433a30"/><stop offset="0.6343" stop-color="#41372c"/><stop offset="0.6857" stop-color="#3f352a"/><stop offset="0.7571" stop-color="#3e3428"/><stop offset="0.8571" stop-color="#3e3428"/><stop offset="1.0000" stop-color="#3e3428"/></linearGradient><linearGradient id="s23" gradientUnits="userSpaceOnUse" x1="0" y1="0.7" x2="0" y2="350.7"><stop offset="0.0000" stop-color="#b3b9c3"/><stop offset="0.0429" stop-color="#b6bbc4"/><stop offset="0.0857" stop-color="#b8bdc5"/><stop offset="0.1286" stop-color="#bbc0c6"/><stop offset="0.1714" stop-color="#bec2c8"/><stop offset="0.2143" stop-color="#c1c4c9"/><stop offset="0.2514" stop-color="#c4c6cb"/><stop offset="0.2743" stop-color="#c5c8cb"/><stop offset="0.2857" stop-color="#c6c8cc"/><stop offset="0.2914" stop-color="#c7c9cc"/><stop offset="0.2943" stop-color="#c5c7ca"/><stop offset="0.2971" stop-color="#c3c5c8"/><stop offset="0.3029" stop-color="#bec0c3"/><stop offset="0.3086" stop-color="#babcbf"/><stop offset="0.3171" stop-color="#b3b5b8"/><stop offset="0.3257" stop-color="#adaeb1"/><stop offset="0.3371" stop-color="#a4a5a7"/><stop offset="0.3486" stop-color="#9c9c9e"/><stop offset="0.3629" stop-color="#919192"/><stop offset="0.3771" stop-color="#888787"/><stop offset="0.3943" stop-color="#7d7b7a"/><stop offset="0.4114" stop-color="#73706f"/><stop offset="0.4343" stop-color="#676360"/><stop offset="0.4571" stop-color="#5e5954"/><stop offset="0.4857" stop-color="#544e48"/><stop offset="0.5143" stop-color="#4d463e"/><stop offset="0.5486" stop-color="#473f36"/><stop offset="0.5886" stop-color="#433a30"/><stop offset="0.6343" stop-color="#41372c"/><stop offset="0.6857" stop-color="#3f352a"/><stop offset="0.7571" stop-color="#3e3428"/><stop offset="0.8571" stop-color="#3e3428"/><stop offset="1.0000" stop-color="#3e3428"/></linearGradient><linearGradient id="s24" gradientUnits="userSpaceOnUse" x1="0" y1="0.7" x2="0" y2="350.7"><stop offset="0.0000" stop-color="#b3b9c3"/><stop offset="0.0429" stop-color="#b6bbc4"/><stop offset="0.0857" stop-color="#b8bdc5"/><stop offset="0.1286" stop-color="#bbc0c6"/><stop offset="0.1714" stop-color="#bec2c8"/><stop offset="0.2143" stop-color="#c1c4c9"/><stop offset="0.2514" stop-color="#c4c6cb"/><stop offset="0.2743" stop-color="#c5c8cb"/><stop offset="0.2857" stop-color="#c6c8cc"/><stop offset="0.2914" stop-color="#c7c9cc"/><stop offset="0.2943" stop-color="#c5c7ca"/><stop offset="0.2971" stop-color="#c3c5c8"/><stop offset="0.3029" stop-color="#bec0c3"/><stop offset="0.3086" stop-color="#babcbf"/><stop offset="0.3171" stop-color="#b3b5b8"/><stop offset="0.3257" stop-color="#adaeb1"/><stop offset="0.3371" stop-color="#a4a5a7"/><stop offset="0.3486" stop-color="#9c9c9e"/><stop offset="0.3629" stop-color="#919192"/><stop offset="0.3771" stop-color="#888787"/><stop offset="0.3943" stop-color="#7d7b7b"/><stop offset="0.4114" stop-color="#73706f"/><stop offset="0.4343" stop-color="#676461"/><stop offset="0.4571" stop-color="#5e5955"/><stop offset="0.4857" stop-color="#544e48"/><stop offset="0.5143" stop-color="#4d463f"/><stop offset="0.5486" stop-color="#473f36"/><stop offset="0.5886" stop-color="#433a30"/><stop offset="0.6343" stop-color="#41372c"/><stop offset="0.6857" stop-color="#3f352a"/><stop offset="0.7571" stop-color="#3e3428"/><stop offset="0.8571" stop-color="#3e3428"/><stop offset="1.0000" stop-color="#3e3428"/></linearGradient><linearGradient id="s25" gradientUnits="userSpaceOnUse" x1="0" y1="0.7" x2="0" y2="350.7"><stop offset="0.0000" stop-color="#b3b9c3"/><stop offset="0.0429" stop-color="#b6bbc4"/><stop offset="0.0857" stop-color="#b8bdc5"/><stop offset="0.1286" stop-color="#bbc0c6"/><stop offset="0.1714" stop-color="#bec2c8"/><stop offset="0.2143" stop-color="#c1c4c9"/><stop offset="0.2514" stop-color="#c4c6cb"/><stop offset="0.2743" stop-color="#c5c8cb"/><stop offset="0.2857" stop-color="#c6c8cc"/><stop offset="0.2914" stop-color="#c7c9cc"/><stop offset="0.2943" stop-color="#c5c7ca"/><stop offset="0.2971" stop-color="#c3c5c8"/><stop offset="0.3029" stop-color="#bec0c3"/><stop offset="0.3086" stop-color="#babcbf"/><stop offset="0.3171" stop-color="#b4b5b8"/><stop offset="0.3257" stop-color="#adaeb1"/><stop offset="0.3371" stop-color="#a4a5a7"/><stop offset="0.3486" stop-color="#9c9c9e"/><stop offset="0.3629" stop-color="#929192"/><stop offset="0.3771" stop-color="#888787"/><stop offset="0.3943" stop-color="#7d7b7b"/><stop offset="0.4114" stop-color="#73716f"/><stop offset="0.4343" stop-color="#686461"/><stop offset="0.4571" stop-color="#5e5955"/><stop offset="0.4857" stop-color="#554e48"/><stop offset="0.5143" stop-color="#4d463f"/><stop offset="0.5486" stop-color="#483f37"/><stop offset="0.5886" stop-color="#433a30"/><stop offset="0.6343" stop-color="#41372c"/><stop offset="0.6857" stop-color="#3f352a"/><stop offset="0.7571" stop-color="#3e3428"/><stop offset="0.8571" stop-color="#3e3428"/><stop offset="1.0000" stop-color="#3e3428"/></linearGradient><linearGradient id="s26" gradientUnits="userSpaceOnUse" x1="0" y1="0.7" x2="0" y2="350.7"><stop offset="0.0000" stop-color="#b3b9c3"/><stop offset="0.0429" stop-color="#b6bbc4"/><stop offset="0.0857" stop-color="#b8bdc5"/><stop offset="0.1286" stop-color="#bbc0c6"/><stop offset="0.1714" stop-color="#bec2c8"/><stop offset="0.2143" stop-color="#c1c4c9"/><stop offset="0.2514" stop-color="#c4c6cb"/><stop offset="0.2743" stop-color="#c5c8cb"/><stop offset="0.2857" stop-color="#c6c8cc"/><stop offset="0.2914" stop-color="#c7c9cc"/><stop offset="0.2943" stop-color="#c5c7ca"/><stop offset="0.2971" stop-color="#c3c5c8"/><stop offset="0.3029" stop-color="#bfc0c3"/><stop offset="0.3086" stop-color="#babcbf"/><stop offset="0.3171" stop-color="#b4b5b8"/><stop offset="0.3257" stop-color="#adaeb1"/><stop offset="0.3371" stop-color="#a4a5a7"/><stop offset="0.3486" stop-color="#9c9c9e"/><stop offset="0.3629" stop-color="#929293"/><stop offset="0.3771" stop-color="#888788"/><stop offset="0.3943" stop-color="#7d7c7b"/><stop offset="0.4114" stop-color="#73716f"/><stop offset="0.4343" stop-color="#686461"/><stop offset="0.4571" stop-color="#5e5955"/><stop offset="0.4857" stop-color="#554f49"/><stop offset="0.5143" stop-color="#4e463f"/><stop offset="0.5486" stop-color="#483f37"/><stop offset="0.5886" stop-color="#433a30"/><stop offset="0.6343" stop-color="#41372c"/><stop offset="0.6857" stop-color="#3f352a"/><stop offset="0.7571" stop-color="#3e3428"/><stop offset="0.8571" stop-color="#3e3428"/><stop offset="1.0000" stop-color="#3e3428"/></linearGradient><linearGradient id="s27" gradientUnits="userSpaceOnUse" x1="0" y1="0.7" x2="0" y2="350.7"><stop offset="0.0000" stop-color="#b3b9c3"/><stop offset="0.0429" stop-color="#b6bbc4"/><stop offset="0.0857" stop-color="#b8bdc5"/><stop offset="0.1286" stop-color="#bbc0c6"/><stop offset="0.1714" stop-color="#bec2c8"/><stop offset="0.2143" stop-color="#c1c4c9"/><stop offset="0.2514" stop-color="#c4c6cb"/><stop offset="0.2743" stop-color="#c5c8cb"/><stop offset="0.2857" stop-color="#c6c8cc"/><stop offset="0.2914" stop-color="#c7c9cc"/><stop offset="0.2943" stop-color="#c5c7ca"/><stop offset="0.2971" stop-color="#c3c5c8"/><stop offset="0.3029" stop-color="#bfc0c4"/><stop offset="0.3086" stop-color="#babcbf"/><stop offset="0.3171" stop-color="#b4b5b8"/><stop offset="0.3257" stop-color="#adafb1"/><stop offset="0.3371" stop-color="#a5a6a8"/><stop offset="0.3486" stop-color="#9c9d9e"/><stop offset="0.3629" stop-color="#929293"/><stop offset="0.3771" stop-color="#898888"/><stop offset="0.3943" stop-color="#7e7c7c"/><stop offset="0.4114" stop-color="#747170"/><stop offset="0.4343" stop-color="#686562"/><stop offset="0.4571" stop-color="#5f5a56"/><stop offset="0.4857" stop-color="#554f49"/><stop offset="0.5143" stop-color="#4e4740"/><stop offset="0.5486" stop-color="#484037"/><stop offset="0.5886" stop-color="#443a31"/><stop offset="0.6343" stop-color="#41372c"/><stop offset="0.6857" stop-color="#3f352a"/><stop offset="0.7571" stop-color="#3e3429"/><stop offset="0.8571" stop-color="#3e3428"/><stop offset="1.0000" stop-color="#3e3428"/></linearGradient><linearGradient id="s28" gradientUnits="userSpaceOnUse" x1="0" y1="0.7" x2="0" y2="350.7"><stop offset="0.0000" stop-color="#b3b9c3"/><stop offset="0.0429" stop-color="#b6bbc4"/><stop offset="0.0857" stop-color="#b9bec5"/><stop offset="0.1286" stop-color="#bbc0c6"/><stop offset="0.1714" stop-color="#bec2c8"/><stop offset="0.2143" stop-color="#c1c4c9"/><stop offset="0.2514" stop-color="#c4c6cb"/><stop offset="0.2743" stop-color="#c5c8cb"/><stop offset="0.2857" stop-color="#c6c8cc"/><stop offset="0.2914" stop-color="#c7c9cc"/><stop offset="0.2943" stop-color="#c5c7ca"/><stop offset="0.2971" stop-color="#c3c5c8"/><stop offset="0.3029" stop-color="#bfc1c4"/><stop offset="0.3086" stop-color="#babcbf"/><stop offset="0.3171" stop-color="#b4b5b8"/><stop offset="0.3257" stop-color="#adafb1"/><stop offset="0.3371" stop-color="#a5a6a8"/><stop offset="0.3486" stop-color="#9d9d9f"/><stop offset="0.3629" stop-color="#939294"/><stop offset="0.3771" stop-color="#898889"/><stop offset="0.3943" stop-color="#7e7d7c"/><stop offset="0.4114" stop-color="#747270"/><stop offset="0.4343" stop-color="#696562"/><stop offset="0.4571" stop-color="#5f5a56"/><stop offset="0.4857" stop-color="#564f4a"/><stop offset="0.5143" stop-color="#4e4740"/><stop offset="0.5486" stop-color="#484038"/><stop offset="0.5886" stop-color="#443b31"/><stop offset="0.6343" stop-color="#41372d"/><stop offset="0.6857" stop-color="#3f352a"/><stop offset="0.7571" stop-color="#3e3429"/><stop offset="0.8571" stop-color="#3e3428"/><stop offset="1.0000" stop-color="#3e3428"/></linearGradient><linearGradient id="s29" gradientUnits="userSpaceOnUse" x1="0" y1="0.7" x2="0" y2="350.7"><stop offset="0.0000" stop-color="#b3bac3"/><stop offset="0.0429" stop-color="#b6bcc4"/><stop offset="0.0857" stop-color="#b9bec5"/><stop offset="0.1286" stop-color="#bbc0c6"/><stop offset="0.1714" stop-color="#bec2c8"/><stop offset="0.2143" stop-color="#c1c4c9"/><stop offset="0.2514" stop-color="#c4c7cb"/><stop offset="0.2743" stop-color="#c5c8cb"/><stop offset="0.2857" stop-color="#c6c9cc"/><stop offset="0.2914" stop-color="#c7c9cc"/><stop offset="0.2943" stop-color="#c5c7ca"/><stop offset="0.2971" stop-color="#c3c5c8"/><stop offset="0.3029" stop-color="#bfc1c4"/><stop offset="0.3086" stop-color="#babcbf"/><stop offset="0.3171" stop-color="#b4b6b8"/><stop offset="0.3257" stop-color="#aeafb1"/><stop offset="0.3371" stop-color="#a5a6a8"/><stop offset="0.3486" stop-color="#9d9d9f"/><stop offset="0.3629" stop-color="#939394"/><stop offset="0.3771" stop-color="#898989"/><stop offset="0.3943" stop-color="#7f7d7d"/><stop offset="0.4114" stop-color="#757271"/><stop offset="0.4343" stop-color="#696663"/><stop offset="0.4571" stop-color="#605b57"/><stop offset="0.4857" stop-color="#56504a"/><stop offset="0.5143" stop-color="#4f4841"/><stop offset="0.5486" stop-color="#494038"/><stop offset="0.5886" stop-color="#443b31"/><stop offset="0.6343" stop-color="#41372d"/><stop offset="0.6857" stop-color="#3f352a"/><stop offset="0.7571" stop-color="#3e3429"/><stop offset="0.8571" stop-color="#3e3428"/><stop offset="1.0000" stop-color="#3e3428"/></linearGradient><linearGradient id="s30" gradientUnits="userSpaceOnUse" x1="0" y1="0.7" x2="0" y2="350.7"><stop offset="0.0000" stop-color="#b4bac3"/><stop offset="0.0429" stop-color="#b6bcc4"/><stop offset="0.0857" stop-color="#b9bec5"/><stop offset="0.1286" stop-color="#bcc0c7"/><stop offset="0.1714" stop-color="#bec2c8"/><stop offset="0.2143" stop-color="#c1c4c9"/><stop offset="0.2514" stop-color="#c4c7cb"/><stop offset="0.2743" stop-color="#c6c8cb"/><stop offset="0.2857" stop-color="#c6c9cc"/><stop offset="0.2914" stop-color="#c7c9cc"/><stop offset="0.2943" stop-color="#c5c7ca"/><stop offset="0.2971" stop-color="#c3c5c8"/><stop offset="0.3029" stop-color="#bfc1c4"/><stop offset="0.3086" stop-color="#bbbcbf"/><stop offset="0.3171" stop-color="#b4b6b9"/><stop offset="0.3257" stop-color="#aeafb2"/><stop offset="0.3371" stop-color="#a6a6a9"/><stop offset="0.3486" stop-color="#9d9ea0"/><stop offset="0.3629" stop-color="#939395"/><stop offset="0.3771" stop-color="#8a898a"/><stop offset="0.3943" stop-color="#7f7e7d"/><stop offset="0.4114" stop-color="#767372"/><stop offset="0.4343" stop-color="#6a6764"/><stop offset="0.4571" stop-color="#605c58"/><stop offset="0.4857" stop-color="#57514b"/><stop offset="0.5143" stop-color="#4f4841"/><stop offset="0.5486" stop-color="#494139"/><stop offset="0.5886" stop-color="#443b32"/><stop offset="0.6343" stop-color="#41382d"/><stop offset="0.6857" stop-color="#40352a"/><stop offset="0.7571" stop-color="#3f3429"/><stop offset="0.8571" stop-color="#3e3428"/><stop offset="1.0000" stop-color="#3e3428"/></linearGradient><linearGradient id="s31" gradientUnits="userSpaceOnUse" x1="0" y1="0.7" x2="0" y2="350.7"><stop offset="0.0000" stop-color="#b4bac3"/><stop offset="0.0429" stop-color="#b6bcc4"/><stop offset="0.0857" stop-color="#b9bec5"/><stop offset="0.1286" stop-color="#bcc0c7"/><stop offset="0.1714" stop-color="#bec2c8"/><stop offset="0.2143" stop-color="#c1c4c9"/><stop offset="0.2514" stop-color="#c4c7cb"/><stop offset="0.2743" stop-color="#c6c8cb"/><stop offset="0.2857" stop-color="#c6c9cc"/><stop offset="0.2914" stop-color="#c7c9cc"/><stop offset="0.2943" stop-color="#c5c7ca"/><stop offset="0.2971" stop-color="#c3c5c8"/><stop offset="0.3029" stop-color="#bfc1c4"/><stop offset="0.3086" stop-color="#bbbcbf"/><stop offset="0.3171" stop-color="#b4b6b9"/><stop offset="0.3257" stop-color="#aeafb2"/><stop offset="0.3371" stop-color="#a6a7a9"/><stop offset="0.3486" stop-color="#9e9ea0"/><stop offset="0.3629" stop-color="#949495"/><stop offset="0.3771" stop-color="#8b8a8a"/><stop offset="0.3943" stop-color="#807e7e"/><stop offset="0.4114" stop-color="#767473"/><stop offset="0.4343" stop-color="#6b6765"/><stop offset="0.4571" stop-color="#615d59"/><stop offset="0.4857" stop-color="#57514c"/><stop offset="0.5143" stop-color="#504942"/><stop offset="0.5486" stop-color="#494139"/><stop offset="0.5886" stop-color="#453c32"/><stop offset="0.6343" stop-color="#41382d"/><stop offset="0.6857" stop-color="#40362a"/><stop offset="0.7571" stop-color="#3f3429"/><stop offset="0.8571" stop-color="#3e3428"/><stop offset="1.0000" stop-color="#3e3428"/></linearGradient><linearGradient id="s32" gradientUnits="userSpaceOnUse" x1="0" y1="0.7" x2="0" y2="350.7"><stop offset="0.0000" stop-color="#b4bac3"/><stop offset="0.0429" stop-color="#b6bcc4"/><stop offset="0.0857" stop-color="#b9bec5"/><stop offset="0.1286" stop-color="#bcc0c7"/><stop offset="0.1714" stop-color="#bfc2c8"/><stop offset="0.2143" stop-color="#c1c5c9"/><stop offset="0.2514" stop-color="#c4c7cb"/><stop offset="0.2743" stop-color="#c6c8cb"/><stop offset="0.2857" stop-color="#c6c9cc"/><stop offset="0.2914" stop-color="#c7c9cc"/><stop offset="0.2943" stop-color="#c5c7ca"/><stop offset="0.2971" stop-color="#c3c5c8"/><stop offset="0.3029" stop-color="#bfc1c4"/><stop offset="0.3086" stop-color="#bbbdc0"/><stop offset="0.3171" stop-color="#b5b6b9"/><stop offset="0.3257" stop-color="#aeb0b2"/><stop offset="0.3371" stop-color="#a6a7a9"/><stop offset="0.3486" stop-color="#9e9fa1"/><stop offset="0.3629" stop-color="#949496"/><stop offset="0.3771" stop-color="#8b8b8b"/><stop offset="0.3943" stop-color="#817f7f"/><stop offset="0.4114" stop-color="#777574"/><stop offset="0.4343" stop-color="#6c6866"/><stop offset="0.4571" stop-color="#625d5a"/><stop offset="0.4857" stop-color="#58524d"/><stop offset="0.5143" stop-color="#504a43"/><stop offset="0.5486" stop-color="#4a423a"/><stop offset="0.5886" stop-color="#453c33"/><stop offset="0.6343" stop-color="#42382e"/><stop offset="0.6857" stop-color="#40362b"/><stop offset="0.7571" stop-color="#3f3429"/><stop offset="0.8571" stop-color="#3e3428"/><stop offset="1.0000" stop-color="#3e3428"/></linearGradient><linearGradient id="s33" gradientUnits="userSpaceOnUse" x1="0" y1="0.7" x2="0" y2="350.7"><stop offset="0.0000" stop-color="#b4bac3"/><stop offset="0.0429" stop-color="#b7bcc4"/><stop offset="0.0857" stop-color="#b9bec5"/><stop offset="0.1286" stop-color="#bcc0c7"/><stop offset="0.1714" stop-color="#bfc2c8"/><stop offset="0.2143" stop-color="#c1c5c9"/><stop offset="0.2514" stop-color="#c4c7cb"/><stop offset="0.2743" stop-color="#c6c8cb"/><stop offset="0.2857" stop-color="#c6c9cc"/><stop offset="0.2914" stop-color="#c7c9cc"/><stop offset="0.2943" stop-color="#c5c7ca"/><stop offset="0.2971" stop-color="#c3c5c8"/><stop offset="0.3029" stop-color="#bfc1c4"/><stop offset="0.3086" stop-color="#bbbdc0"/><stop offset="0.3171" stop-color="#b5b6b9"/><stop offset="0.3257" stop-color="#afb0b3"/><stop offset="0.3371" stop-color="#a7a8aa"/><stop offset="0.3486" stop-color="#9f9fa1"/><stop offset="0.3629" stop-color="#959596"/><stop offset="0.3771" stop-color="#8c8b8c"/><stop offset="0.3943" stop-color="#818080"/><stop offset="0.4114" stop-color="#787675"/><stop offset="0.4343" stop-color="#6c6967"/><stop offset="0.4571" stop-color="#635e5b"/><stop offset="0.4857" stop-color="#59534e"/><stop offset="0.5143" stop-color="#514a44"/><stop offset="0.5486" stop-color="#4a433b"/><stop offset="0.5886" stop-color="#453c33"/><stop offset="0.6343" stop-color="#42382e"/><stop offset="0.6857" stop-color="#40362b"/><stop offset="0.7571" stop-color="#3f3429"/><stop offset="0.8571" stop-color="#3e3428"/><stop offset="1.0000" stop-color="#3e3428"/></linearGradient><linearGradient id="s34" gradientUnits="userSpaceOnUse" x1="0" y1="0.7" x2="0" y2="350.7"><stop offset="0.0000" stop-color="#b4bac3"/><stop offset="0.0429" stop-color="#b7bcc4"/><stop offset="0.0857" stop-color="#b9bec6"/><stop offset="0.1286" stop-color="#bcc0c7"/><stop offset="0.1714" stop-color="#bfc2c8"/><stop offset="0.2143" stop-color="#c2c5c9"/><stop offset="0.2514" stop-color="#c4c7cb"/><stop offset="0.2743" stop-color="#c6c8cb"/><stop offset="0.2857" stop-color="#c6c9cc"/><stop offset="0.2914" stop-color="#c7c9cc"/><stop offset="0.2943" stop-color="#c5c7ca"/><stop offset="0.2971" stop-color="#c3c5c8"/><stop offset="0.3029" stop-color="#bfc1c4"/><stop offset="0.3086" stop-color="#bbbdc0"/><stop offset="0.3171" stop-color="#b5b7b9"/><stop offset="0.3257" stop-color="#afb0b3"/><stop offset="0.3371" stop-color="#a7a8aa"/><stop offset="0.3486" stop-color="#9fa0a2"/><stop offset="0.3629" stop-color="#969697"/><stop offset="0.3771" stop-color="#8d8c8d"/><stop offset="0.3943" stop-color="#828181"/><stop offset="0.4114" stop-color="#797776"/><stop offset="0.4343" stop-color="#6d6a68"/><stop offset="0.4571" stop-color="#645f5c"/><stop offset="0.4857" stop-color="#5a544f"/><stop offset="0.5143" stop-color="#524b45"/><stop offset="0.5486" stop-color="#4b433b"/><stop offset="0.5886" stop-color="#463d34"/><stop offset="0.6343" stop-color="#42392e"/><stop offset="0.6857" stop-color="#40362b"/><stop offset="0.7571" stop-color="#3f3429"/><stop offset="0.8571" stop-color="#3e3428"/><stop offset="1.0000" stop-color="#3e3428"/></linearGradient><linearGradient id="s35" gradientUnits="userSpaceOnUse" x1="0" y1="0.7" x2="0" y2="350.7"><stop offset="0.0000" stop-color="#b5bac3"/><stop offset="0.0429" stop-color="#b7bcc4"/><stop offset="0.0857" stop-color="#babec6"/><stop offset="0.1286" stop-color="#bcc0c7"/><stop offset="0.1714" stop-color="#bfc2c8"/><stop offset="0.2143" stop-color="#c2c5c9"/><stop offset="0.2514" stop-color="#c4c7cb"/><stop offset="0.2743" stop-color="#c6c8cb"/><stop offset="0.2857" stop-color="#c6c9cc"/><stop offset="0.2914" stop-color="#c7c9cc"/><stop offset="0.2943" stop-color="#c5c7ca"/><stop offset="0.2971" stop-color="#c3c5c8"/><stop offset="0.3029" stop-color="#bfc1c4"/><stop offset="0.3086" stop-color="#bbbdc0"/><stop offset="0.3171" stop-color="#b5b7ba"/><stop offset="0.3257" stop-color="#afb1b3"/><stop offset="0.3371" stop-color="#a8a9ab"/><stop offset="0.3486" stop-color="#a0a0a2"/><stop offset="0.3629" stop-color="#969698"/><stop offset="0.3771" stop-color="#8d8d8e"/><stop offset="0.3943" stop-color="#838282"/><stop offset="0.4114" stop-color="#7a7877"/><stop offset="0.4343" stop-color="#6e6b69"/><stop offset="0.4571" stop-color="#65605d"/><stop offset="0.4857" stop-color="#5a5550"/><stop offset="0.5143" stop-color="#534c46"/><stop offset="0.5486" stop-color="#4c443c"/><stop offset="0.5886" stop-color="#463e35"/><stop offset="0.6343" stop-color="#42392f"/><stop offset="0.6857" stop-color="#40362b"/><stop offset="0.7571" stop-color="#3f3529"/><stop offset="0.8571" stop-color="#3e3428"/><stop offset="1.0000" stop-color="#3e3428"/></linearGradient><linearGradient id="s36" gradientUnits="userSpaceOnUse" x1="0" y1="0.7" x2="0" y2="350.7"><stop offset="0.0000" stop-color="#b5bbc3"/><stop offset="0.0429" stop-color="#b7bdc5"/><stop offset="0.0857" stop-color="#babec6"/><stop offset="0.1286" stop-color="#bcc0c7"/><stop offset="0.1714" stop-color="#bfc3c8"/><stop offset="0.2143" stop-color="#c2c5ca"/><stop offset="0.2514" stop-color="#c4c7cb"/><stop offset="0.2743" stop-color="#c6c8cb"/><stop offset="0.2857" stop-color="#c6c9cc"/><stop offset="0.2914" stop-color="#c7c9cc"/><stop offset="0.2943" stop-color="#c5c7ca"/><stop offset="0.2971" stop-color="#c3c5c8"/><stop offset="0.3029" stop-color="#bfc1c4"/><stop offset="0.3086" stop-color="#bbbdc0"/><stop offset="0.3171" stop-color="#b6b7ba"/><stop offset="0.3257" stop-color="#b0b1b4"/><stop offset="0.3371" stop-color="#a8a9ab"/><stop offset="0.3486" stop-color="#a0a1a3"/><stop offset="0.3629" stop-color="#979799"/><stop offset="0.3771" stop-color="#8e8e8f"/><stop offset="0.3943" stop-color="#848383"/><stop offset="0.4114" stop-color="#7b7978"/><stop offset="0.4343" stop-color="#6f6c6a"/><stop offset="0.4571" stop-color="#66615e"/><stop offset="0.4857" stop-color="#5b5651"/><stop offset="0.5143" stop-color="#534d47"/><stop offset="0.5486" stop-color="#4c453d"/><stop offset="0.5886" stop-color="#473e35"/><stop offset="0.6343" stop-color="#43392f"/><stop offset="0.6857" stop-color="#40372c"/><stop offset="0.7571" stop-color="#3f3529"/><stop offset="0.8571" stop-color="#3e3428"/><stop offset="1.0000" stop-color="#3e3428"/></linearGradient><linearGradient id="s37" gradientUnits="userSpaceOnUse" x1="0" y1="0.7" x2="0" y2="350.7"><stop offset="0.0000" stop-color="#b5bbc4"/><stop offset="0.0429" stop-color="#b7bdc5"/><stop offset="0.0857" stop-color="#babfc6"/><stop offset="0.1286" stop-color="#bcc1c7"/><stop offset="0.1714" stop-color="#bfc3c8"/><stop offset="0.2143" stop-color="#c2c5ca"/><stop offset="0.2514" stop-color="#c4c7cb"/><stop offset="0.2743" stop-color="#c6c8cc"/><stop offset="0.2857" stop-color="#c6c9cc"/><stop offset="0.2914" stop-color="#c7c9cc"/><stop offset="0.2943" stop-color="#c5c7cb"/><stop offset="0.2971" stop-color="#c3c5c9"/><stop offset="0.3029" stop-color="#bfc1c4"/><stop offset="0.3086" stop-color="#bcbdc0"/><stop offset="0.3171" stop-color="#b6b7ba"/><stop offset="0.3257" stop-color="#b0b1b4"/><stop offset="0.3371" stop-color="#a8a9ac"/><stop offset="0.3486" stop-color="#a1a2a4"/><stop offset="0.3629" stop-color="#989899"/><stop offset="0.3771" stop-color="#8f8f8f"/><stop offset="0.3943" stop-color="#858484"/><stop offset="0.4114" stop-color="#7c7a79"/><stop offset="0.4343" stop-color="#706d6c"/><stop offset="0.4571" stop-color="#676360"/><stop offset="0.4857" stop-color="#5c5753"/><stop offset="0.5143" stop-color="#544e48"/><stop offset="0.5486" stop-color="#4d463e"/><stop offset="0.5886" stop-color="#473f36"/><stop offset="0.6343" stop-color="#433a30"/><stop offset="0.6857" stop-color="#41372c"/><stop offset="0.7571" stop-color="#3f3529"/><stop offset="0.8571" stop-color="#3e3428"/><stop offset="1.0000" stop-color="#3e3428"/></linearGradient><linearGradient id="s38" gradientUnits="userSpaceOnUse" x1="0" y1="0.7" x2="0" y2="350.7"><stop offset="0.0000" stop-color="#b5bbc4"/><stop offset="0.0429" stop-color="#b8bdc5"/><stop offset="0.0857" stop-color="#babfc6"/><stop offset="0.1286" stop-color="#bdc1c7"/><stop offset="0.1714" stop-color="#bfc3c8"/><stop offset="0.2143" stop-color="#c2c5ca"/><stop offset="0.2514" stop-color="#c4c7cb"/><stop offset="0.2743" stop-color="#c6c8cc"/><stop offset="0.2857" stop-color="#c6c9cc"/><stop offset="0.2914" stop-color="#c7c9cc"/><stop offset="0.2943" stop-color="#c5c7cb"/><stop offset="0.2971" stop-color="#c3c5c9"/><stop offset="0.3029" stop-color="#c0c2c5"/><stop offset="0.3086" stop-color="#bcbec1"/><stop offset="0.3171" stop-color="#b6b8bb"/><stop offset="0.3257" stop-color="#b0b2b4"/><stop offset="0.3371" stop-color="#a9aaac"/><stop offset="0.3486" stop-color="#a2a2a4"/><stop offset="0.3629" stop-color="#98999a"/><stop offset="0.3771" stop-color="#908f90"/><stop offset="0.3943" stop-color="#868585"/><stop offset="0.4114" stop-color="#7d7b7a"/><stop offset="0.4343" stop-color="#716f6d"/><stop offset="0.4571" stop-color="#686461"/><stop offset="0.4857" stop-color="#5d5854"/><stop offset="0.5143" stop-color="#554f49"/><stop offset="0.5486" stop-color="#4e473f"/><stop offset="0.5886" stop-color="#483f37"/><stop offset="0.6343" stop-color="#443a31"/><stop offset="0.6857" stop-color="#41372c"/><stop offset="0.7571" stop-color="#3f352a"/><stop offset="0.8571" stop-color="#3e3428"/><stop offset="1.0000" stop-color="#3e3428"/></linearGradient><linearGradient id="s39" gradientUnits="userSpaceOnUse" x1="0" y1="0.7" x2="0" y2="350.7"><stop offset="0.0000" stop-color="#b6bbc4"/><stop offset="0.0429" stop-color="#b8bdc5"/><stop offset="0.0857" stop-color="#babfc6"/><stop offset="0.1286" stop-color="#bdc1c7"/><stop offset="0.1714" stop-color="#bfc3c8"/><stop offset="0.2143" stop-color="#c2c5ca"/><stop offset="0.2514" stop-color="#c4c7cb"/><stop offset="0.2743" stop-color="#c6c8cc"/><stop offset="0.2857" stop-color="#c6c9cc"/><stop offset="0.2914" stop-color="#c7c9cc"/><stop offset="0.2943" stop-color="#c5c7cb"/><stop offset="0.2971" stop-color="#c3c5c9"/><stop offset="0.3029" stop-color="#c0c2c5"/><stop offset="0.3086" stop-color="#bcbec1"/><stop offset="0.3171" stop-color="#b6b8bb"/><stop offset="0.3257" stop-color="#b1b2b5"/><stop offset="0.3371" stop-color="#a9aaad"/><stop offset="0.3486" stop-color="#a2a3a5"/><stop offset="0.3629" stop-color="#99999b"/><stop offset="0.3771" stop-color="#919091"/><stop offset="0.3943" stop-color="#878686"/><stop offset="0.4114" stop-color="#7e7c7b"/><stop offset="0.4343" stop-color="#72706e"/><stop offset="0.4571" stop-color="#696562"/><stop offset="0.4857" stop-color="#5e5a55"/><stop offset="0.5143" stop-color="#56504b"/><stop offset="0.5486" stop-color="#4f4740"/><stop offset="0.5886" stop-color="#494038"/><stop offset="0.6343" stop-color="#443b31"/><stop offset="0.6857" stop-color="#41372d"/><stop offset="0.7571" stop-color="#3f352a"/><stop offset="0.8571" stop-color="#3e3428"/><stop offset="1.0000" stop-color="#3e3428"/></linearGradient><linearGradient id="s40" gradientUnits="userSpaceOnUse" x1="0" y1="0.7" x2="0" y2="350.7"><stop offset="0.0000" stop-color="#b6bbc4"/><stop offset="0.0429" stop-color="#b8bdc5"/><stop offset="0.0857" stop-color="#babfc6"/><stop offset="0.1286" stop-color="#bdc1c7"/><stop offset="0.1714" stop-color="#bfc3c8"/><stop offset="0.2143" stop-color="#c2c5ca"/><stop offset="0.2514" stop-color="#c4c7cb"/><stop offset="0.2743" stop-color="#c6c8cc"/><stop offset="0.2857" stop-color="#c6c9cc"/><stop offset="0.2914" stop-color="#c7c9cc"/><stop offset="0.2943" stop-color="#c5c7cb"/><stop offset="0.2971" stop-color="#c4c6c9"/><stop offset="0.3029" stop-color="#c0c2c5"/><stop offset="0.3086" stop-color="#bcbec1"/><stop offset="0.3171" stop-color="#b7b8bb"/><stop offset="0.3257" stop-color="#b1b3b5"/><stop offset="0.3371" stop-color="#aaabad"/><stop offset="0.3486" stop-color="#a3a3a6"/><stop offset="0.3629" stop-color="#9a9a9c"/><stop offset="0.3771" stop-color="#919192"/><stop offset="0.3943" stop-color="#888787"/><stop offset="0.4114" stop-color="#7f7d7d"/><stop offset="0.4343" stop-color="#747170"/><stop offset="0.4571" stop-color="#6a6664"/><stop offset="0.4857" stop-color="#605b57"/><stop offset="0.5143" stop-color="#57514c"/><stop offset="0.5486" stop-color="#504842"/><stop offset="0.5886" stop-color="#494139"/><stop offset="0.6343" stop-color="#443b32"/><stop offset="0.6857" stop-color="#41382d"/><stop offset="0.7571" stop-color="#3f352a"/><stop offset="0.8571" stop-color="#3e3428"/><stop offset="1.0000" stop-color="#3e3428"/></linearGradient><linearGradient id="s41" gradientUnits="userSpaceOnUse" x1="0" y1="0.7" x2="0" y2="350.7"><stop offset="0.0000" stop-color="#b6bcc4"/><stop offset="0.0429" stop-color="#b8bdc5"/><stop offset="0.0857" stop-color="#bbbfc6"/><stop offset="0.1286" stop-color="#bdc1c7"/><stop offset="0.1714" stop-color="#c0c3c8"/><stop offset="0.2143" stop-color="#c2c5ca"/><stop offset="0.2514" stop-color="#c4c7cb"/><stop offset="0.2743" stop-color="#c6c8cc"/><stop offset="0.2857" stop-color="#c6c9cc"/><stop offset="0.2914" stop-color="#c7c9cc"/><stop offset="0.2943" stop-color="#c5c7cb"/><stop offset="0.2971" stop-color="#c4c6c9"/><stop offset="0.3029" stop-color="#c0c2c5"/><stop offset="0.3086" stop-color="#bcbec1"/><stop offset="0.3171" stop-color="#b7b9bb"/><stop offset="0.3257" stop-color="#b2b3b6"/><stop offset="0.3371" stop-color="#aaacae"/><stop offset="0.3486" stop-color="#a3a4a6"/><stop offset="0.3629" stop-color="#9b9b9d"/><stop offset="0.3771" stop-color="#929293"/><stop offset="0.3943" stop-color="#898888"/><stop offset="0.4114" stop-color="#807e7e"/><stop offset="0.4343" stop-color="#757271"/><stop offset="0.4571" stop-color="#6b6865"/><stop offset="0.4857" stop-color="#615c58"/><stop offset="0.5143" stop-color="#58534d"/><stop offset="0.5486" stop-color="#504943"/><stop offset="0.5886" stop-color="#4a423a"/><stop offset="0.6343" stop-color="#453c33"/><stop offset="0.6857" stop-color="#42382e"/><stop offset="0.7571" stop-color="#40352a"/><stop offset="0.8571" stop-color="#3e3429"/><stop offset="1.0000" stop-color="#3e3428"/></linearGradient><linearGradient id="s42" gradientUnits="userSpaceOnUse" x1="0" y1="0.7" x2="0" y2="350.7"><stop offset="0.0000" stop-color="#b6bcc4"/><stop offset="0.0429" stop-color="#b9bec5"/><stop offset="0.0857" stop-color="#bbbfc6"/><stop offset="0.1286" stop-color="#bdc1c7"/><stop offset="0.1714" stop-color="#c0c3c9"/><stop offset="0.2143" stop-color="#c2c5ca"/><stop offset="0.2514" stop-color="#c4c7cb"/><stop offset="0.2743" stop-color="#c6c8cc"/><stop offset="0.2857" stop-color="#c6c9cc"/><stop offset="0.2914" stop-color="#c7c9cc"/><stop offset="0.2943" stop-color="#c5c7cb"/><stop offset="0.2971" stop-color="#c4c6c9"/><stop offset="0.3029" stop-color="#c0c2c5"/><stop offset="0.3086" stop-color="#bdbec1"/><stop offset="0.3171" stop-color="#b7b9bc"/><stop offset="0.3257" stop-color="#b2b3b6"/><stop offset="0.3371" stop-color="#abacae"/><stop offset="0.3486" stop-color="#a4a5a7"/><stop offset="0.3629" stop-color="#9b9c9d"/><stop offset="0.3771" stop-color="#939394"/><stop offset="0.3943" stop-color="#8a8989"/><stop offset="0.4114" stop-color="#817f7f"/><stop offset="0.4343" stop-color="#767472"/><stop offset="0.4571" stop-color="#6c6967"/><stop offset="0.4857" stop-color="#625d5a"/><stop offset="0.5143" stop-color="#59544f"/><stop offset="0.5486" stop-color="#514b44"/><stop offset="0.5886" stop-color="#4b433b"/><stop offset="0.6343" stop-color="#463d33"/><stop offset="0.6857" stop-color="#42392e"/><stop offset="0.7571" stop-color="#40362b"/><stop offset="0.8571" stop-color="#3f3429"/><stop offset="1.0000" stop-color="#3e3428"/></linearGradient><linearGradient id="s43" gradientUnits="userSpaceOnUse" x1="0" y1="0.7" x2="0" y2="350.7"><stop offset="0.0000" stop-color="#b7bcc4"/><stop offset="0.0429" stop-color="#b9bec5"/><stop offset="0.0857" stop-color="#bbbfc6"/><stop offset="0.1286" stop-color="#bdc1c7"/><stop offset="0.1714" stop-color="#c0c3c9"/><stop offset="0.2143" stop-color="#c2c5ca"/><stop offset="0.2514" stop-color="#c4c7cb"/><stop offset="0.2743" stop-color="#c6c8cc"/><stop offset="0.2857" stop-color="#c6c9cc"/><stop offset="0.2914" stop-color="#c7c9cc"/><stop offset="0.2943" stop-color="#c5c7cb"/><stop offset="0.2971" stop-color="#c4c6c9"/><stop offset="0.3029" stop-color="#c0c2c5"/><stop offset="0.3086" stop-color="#bdbfc2"/><stop offset="0.3171" stop-color="#b8b9bc"/><stop offset="0.3257" stop-color="#b2b4b6"/><stop offset="0.3371" stop-color="#abadaf"/><stop offset="0.3486" stop-color="#a5a5a8"/><stop offset="0.3629" stop-color="#9c9d9e"/><stop offset="0.3771" stop-color="#949495"/><stop offset="0.3943" stop-color="#8b8a8b"/><stop offset="0.4114" stop-color="#828180"/><stop offset="0.4343" stop-color="#777574"/><stop offset="0.4571" stop-color="#6d6a68"/><stop offset="0.4857" stop-color="#635f5b"/><stop offset="0.5143" stop-color="#5a5550"/><stop offset="0.5486" stop-color="#524c45"/><stop offset="0.5886" stop-color="#4b443c"/><stop offset="0.6343" stop-color="#463d34"/><stop offset="0.6857" stop-color="#42392f"/><stop offset="0.7571" stop-color="#40362b"/><stop offset="0.8571" stop-color="#3f3429"/><stop offset="1.0000" stop-color="#3e3428"/></linearGradient><linearGradient id="s44" gradientUnits="userSpaceOnUse" x1="0" y1="0.7" x2="0" y2="350.7"><stop offset="0.0000" stop-color="#b7bcc4"/><stop offset="0.0429" stop-color="#b9bec5"/><stop offset="0.0857" stop-color="#bbc0c6"/><stop offset="0.1286" stop-color="#bec1c7"/><stop offset="0.1714" stop-color="#c0c3c9"/><stop offset="0.2143" stop-color="#c2c5ca"/><stop offset="0.2514" stop-color="#c4c7cb"/><stop offset="0.2743" stop-color="#c6c8cc"/><stop offset="0.2857" stop-color="#c6c9cc"/><stop offset="0.2914" stop-color="#c7c9cc"/><stop offset="0.2943" stop-color="#c5c7cb"/><stop offset="0.2971" stop-color="#c4c6c9"/><stop offset="0.3029" stop-color="#c0c2c5"/><stop offset="0.3086" stop-color="#bdbfc2"/><stop offset="0.3171" stop-color="#b8b9bc"/><stop offset="0.3257" stop-color="#b3b4b7"/><stop offset="0.3371" stop-color="#acadb0"/><stop offset="0.3486" stop-color="#a5a6a8"/><stop offset="0.3629" stop-color="#9d9d9f"/><stop offset="0.3771" stop-color="#959596"/><stop offset="0.3943" stop-color="#8c8b8c"/><stop offset="0.4114" stop-color="#838282"/><stop offset="0.4343" stop-color="#787675"/><stop offset="0.4571" stop-color="#6f6c69"/><stop offset="0.4857" stop-color="#64605d"/><stop offset="0.5143" stop-color="#5c5652"/><stop offset="0.5486" stop-color="#534d47"/><stop offset="0.5886" stop-color="#4c453d"/><stop offset="0.6343" stop-color="#473e35"/><stop offset="0.6857" stop-color="#433a30"/><stop offset="0.7571" stop-color="#40362b"/><stop offset="0.8571" stop-color="#3f3429"/><stop offset="1.0000" stop-color="#3e3428"/></linearGradient><filter id="hb" filterUnits="userSpaceOnUse" x="-84" y="-2" width="1260" height="354"><feGaussianBlur stdDeviation="12 0"/></filter></defs>
<rect x="0" y="340" width="1092" height="590" fill="#3e3428"/>
<g filter="url(#hb)"><rect x="-84" y="-2" width="29" height="354" fill="url(#s0)"/><rect x="-56" y="-2" width="29" height="354" fill="url(#s1)"/><rect x="-28" y="-2" width="29" height="354" fill="url(#s2)"/><rect x="0" y="-2" width="29" height="354" fill="url(#s3)"/><rect x="28" y="-2" width="29" height="354" fill="url(#s4)"/><rect x="56" y="-2" width="29" height="354" fill="url(#s5)"/><rect x="84" y="-2" width="29" height="354" fill="url(#s6)"/><rect x="112" y="-2" width="29" height="354" fill="url(#s7)"/><rect x="140" y="-2" width="29" height="354" fill="url(#s8)"/><rect x="168" y="-2" width="29" height="354" fill="url(#s9)"/><rect x="196" y="-2" width="29" height="354" fill="url(#s10)"/><rect x="224" y="-2" width="29" height="354" fill="url(#s11)"/><rect x="252" y="-2" width="29" height="354" fill="url(#s12)"/><rect x="280" y="-2" width="29" height="354" fill="url(#s13)"/><rect x="308" y="-2" width="29" height="354" fill="url(#s14)"/><rect x="336" y="-2" width="29" height="354" fill="url(#s15)"/><rect x="364" y="-2" width="29" height="354" fill="url(#s16)"/><rect x="392" y="-2" width="29" height="354" fill="url(#s17)"/><rect x="420" y="-2" width="29" height="354" fill="url(#s18)"/><rect x="448" y="-2" width="29" height="354" fill="url(#s19)"/><rect x="476" y="-2" width="29" height="354" fill="url(#s20)"/><rect x="504" y="-2" width="29" height="354" fill="url(#s21)"/><rect x="532" y="-2" width="29" height="354" fill="url(#s22)"/><rect x="560" y="-2" width="29" height="354" fill="url(#s23)"/><rect x="588" y="-2" width="29" height="354" fill="url(#s24)"/><rect x="616" y="-2" width="29" height="354" fill="url(#s25)"/><rect x="644" y="-2" width="29" height="354" fill="url(#s26)"/><rect x="672" y="-2" width="29" height="354" fill="url(#s27)"/><rect x="700" y="-2" width="29" height="354" fill="url(#s28)"/><rect x="728" y="-2" width="29" height="354" fill="url(#s29)"/><rect x="756" y="-2" width="29" height="354" fill="url(#s30)"/><rect x="784" y="-2" width="29" height="354" fill="url(#s31)"/><rect x="812" y="-2" width="29" height="354" fill="url(#s32)"/><rect x="840" y="-2" width="29" height="354" fill="url(#s33)"/><rect x="868" y="-2" width="29" height="354" fill="url(#s34)"/><rect x="896" y="-2" width="29" height="354" fill="url(#s35)"/><rect x="924" y="-2" width="29" height="354" fill="url(#s36)"/><rect x="952" y="-2" width="29" height="354" fill="url(#s37)"/><rect x="980" y="-2" width="29" height="354" fill="url(#s38)"/><rect x="1008" y="-2" width="29" height="354" fill="url(#s39)"/><rect x="1036" y="-2" width="29" height="354" fill="url(#s40)"/><rect x="1064" y="-2" width="29" height="354" fill="url(#s41)"/><rect x="1092" y="-2" width="29" height="354" fill="url(#s42)"/><rect x="1120" y="-2" width="29" height="354" fill="url(#s43)"/><rect x="1148" y="-2" width="29" height="354" fill="url(#s44)"/></g>
<path d="M105.8 167.2L-2 175.4M169 164.9L-2 178.4M222.5 163.2L-2 181.7M267.9 162L-2 185.3M312.2 160.8L96.8 180.3M350.4 160.1L171.2 177.1M386.9 159.4L234.3 174.7M452.6 158.8L336 171.8M484.6 158.5L380.1 170.8M516.6 158.1L424.2 169.8M545.5 158.2L462.2 169.4M574.3 158.2L497 169.5M603 158.3L534.8 169M628.7 158.9L569.5 169.1M686.7 159.1L636.6 169.6M712.8 160L668.9 170.3M742.3 160.2L701.6 171M769.5 161.1L735.1 171.8M799.3 161.4L768.3 172.9M827.6 162.6L803 173.9M856.8 164L838.8 174.8M920.5 165.1L912.6 177.9M953 168.3L951.9 180.3M988.1 169.6L992.8 180.7M1023.9 170.3L1036.2 183.4M1061.2 171.6L1081.4 185.3M787.7 161L1094 172M607.6 158.3L1094 177.2M547.5 158.1L1094 180.1M499.5 158.3L1094 183.2M451.4 158.5L742.7 171.3M409.4 159.1L637.6 169.5M370.3 159.8L562.5 169M328.3 160.4L502.5 169.1M253.2 162.4L397.4 170.4M214.2 163.5L349.3 171.4M174.7 164.7L303.4 172.6M138.7 166.2L255.5 173.9M96.8 167.6L210.6 175.5M57.9 169.3L165.7 177.4M16 171.1L117.8 179.3M-2 181.9L22 184.2" stroke="#7c7c7c" stroke-opacity="0.040" stroke-width="1" fill="none" shape-rendering="crispEdges"/>
<path d="M96.8 180.3L-2 189.2M171.2 177.1L-2 193.5M234.3 174.7L72.8 190.8M336 171.8L231.3 183.5M380.1 170.8L293.6 181.1M424.2 169.8L346.7 179.6M462.2 169.4L393.7 178.7M497 169.5L440.6 177.7M534.8 169L481.4 177.4M569.5 169.1L522.1 177.2M636.6 169.6L598.4 177.6M668.9 170.3L636.7 177.8M701.6 171L675.4 178M735.1 171.8L712.1 178.9M768.3 172.9L748.5 180.2M803 173.9L786.6 181.4M838.8 174.8L825.9 182.6M912.6 177.9L907.9 185.5M951.9 180.3L951 189.3M992.8 180.7L997.5 191.8M1036.2 183.4L1046.6 194.3M1081.4 185.3L1094 193.9M742.7 171.3L1094 186.6M637.6 169.5L1094 190.3M562.5 169L880.8 184.1M1000.9 189.8L1094 194.3M502.5 169.1L682.6 178.1M397.4 170.4L517.5 177M349.3 171.4L454.4 177.5M303.4 172.6L396.3 178.3M255.5 173.9L342.4 179.6M210.6 175.5L291.5 181.2M165.7 177.4L240.6 183M117.8 179.3L189.7 185.1M22 184.2L84.8 190.2M-2 189.9L30.9 193.4" stroke="#7c7c7c" stroke-opacity="0.079" stroke-width="1" fill="none" shape-rendering="crispEdges"/>
<path d="M72.8 190.8L-2 198.3M231.3 183.5L111.6 196.8M293.6 181.1L201 192.1M346.7 179.6L272.2 189M393.7 178.7L331.2 187.1M440.6 177.7L387.1 185.4M481.4 177.4L436.9 184.4M522.1 177.2L480.7 184.3M598.4 177.6L568.9 183.7M636.7 177.8L610.3 184M675.4 178L649.2 185M712.1 178.9L689.2 186M748.5 180.2L731.6 186.5M786.6 181.4L773 187.6M825.9 182.6L813.1 190.3M907.9 185.5L903.2 193.2M951 189.3L950.4 195.3M997.5 191.8L1001 200.1M1046.6 194.3L1054.8 203M880.8 184.1L1000.9 189.8M682.6 178.1L1094 198.6M517.5 177L652.6 184.5M454.4 177.5L559.5 183.6M396.3 178.3L486.1 183.9M342.4 179.6L423.2 184.9M291.5 181.2L363.3 186.2M240.6 183L306.4 187.9M189.7 185.1L249.5 189.9M84.8 190.2L138.7 195.3M30.9 193.4L81.6 198.7M-2 199.7L21.9 202.4" stroke="#7c7c7c" stroke-opacity="0.119" stroke-width="1" fill="none" shape-rendering="crispEdges"/>
<path d="M111.6 196.8L-2 209.5M201 192.1L87.6 205.5M272.2 189L188.7 199.5M331.2 187.1L265.8 196M387.1 185.4L330.7 193.6M436.9 184.4L389.5 191.9M480.7 184.3L442.2 190.9M568.9 183.7L539.5 189.9M610.3 184L583.9 190.2M649.2 185L628.9 190.4M689.2 186L672 191.3M731.6 186.5L714.7 192.7M773 187.6L759.4 193.9M813.1 190.3L802.8 196.5M903.2 193.2L898.4 200.9M950.4 195.3L949.5 204.3M1001 200.1L1003.4 205.7M1054.8 203L1061 209.6M652.6 184.5L1094 208.8M559.5 183.6L694.6 191.5M486.1 183.9L584.9 190M423.2 184.9L501.1 190M363.3 186.2L429.2 190.8M306.4 187.9L366.3 192.4M249.5 189.9L306.4 194.5M138.7 195.3L186.7 199.9M81.6 198.7L126.4 203.4M21.9 202.4L63.7 207.3" stroke="#7c7c7c" stroke-opacity="0.159" stroke-width="1" fill="none" shape-rendering="crispEdges"/>
<path d="M87.6 205.5L-2 216.1M188.7 199.5L87.4 212.3M265.8 196L191.4 206M330.7 193.6L274.3 201.9M389.5 191.9L342 199.4M442.2 190.9L403.7 197.5M539.5 189.9L510.1 196M583.9 190.2L560.5 195.7M628.9 190.4L608.5 195.8M672 191.3L654.8 196.7M714.7 192.7L700.6 197.9M759.4 193.9L745.7 200.1M802.8 196.5L795.1 201.1M898.4 200.9L895.3 206M949.5 204.3L949 210.3M1003.4 205.7L1006.9 214M1061 209.6L1069.2 218.3M694.6 191.5L1094 214.7M584.9 190L713.7 197.9M501.1 190L587.9 195.7M429.2 190.8L501.1 195.8M366.3 192.4L426.2 196.9M306.4 194.5L357.3 198.6M186.7 199.9L228.6 203.9M126.4 203.4L165.2 207.4M63.7 207.3L99.5 211.5M-2 211.8L33.7 216.5" stroke="#7c7c7c" stroke-opacity="0.198" stroke-width="1" fill="none" shape-rendering="crispEdges"/>
<path d="M87.4 212.3L-2 223.6M191.4 206L105.1 217.7M274.3 201.9L211.9 210.9M342 199.4L294.6 206.8M403.7 197.5L365.2 204.1M510.1 196L483.6 201.5M560.5 195.7L537 201.2M608.5 195.8L588.2 201.3M654.8 196.7L637.6 202M700.6 197.9L686.5 203.1M745.7 200.1L734.8 205.1M795.1 201.1L784.8 207.3M895.3 206L890.5 213.7M949 210.3L948.4 216.3M1006.9 214L1009.2 219.5M1069.2 218.3L1075.4 224.8M713.7 197.9L1094 221.3M587.9 195.7L707.7 203.5M501.1 195.8L578.9 201.3M426.2 196.9L489.1 201.6M357.3 198.6L411.2 203M228.6 203.9L270.5 207.9M165.2 207.4L204.1 211.5M99.5 211.5L135.4 215.6M33.7 216.5L66.5 220.8" stroke="#7c7c7c" stroke-opacity="0.238" stroke-width="1" fill="none" shape-rendering="crispEdges"/>
<path d="M105.1 217.7L-2 232.2M211.9 210.9L134.6 222.2M294.6 206.8L238.2 215.7M365.2 204.1L320.8 211.7M483.6 201.5L454.2 207.7M537 201.2L510.7 207.3M588.2 201.3L567.8 206.7M637.6 202L620.4 207.3M686.5 203.1L672.4 208.4M734.8 205.1L723.9 210.1M784.8 207.3L777.1 212M890.5 213.7L887.4 218.8M948.4 216.3L947.8 222.2M1009.2 219.5L1012.8 227.8M1075.4 224.8L1083.7 233.5M707.7 203.5L1094 228.8M578.9 201.3L683.7 208.6M489.1 201.6L558 206.8M411.2 203L465.1 207.3M270.5 207.9L312.4 211.9M204.1 211.5L242.9 215.6M135.4 215.6L171.2 219.8M66.5 220.8L99.3 225.1M-2 227.5L21.8 231.1" stroke="#7c7c7c" stroke-opacity="0.278" stroke-width="1" fill="none" shape-rendering="crispEdges"/>
<path d="M134.6 222.2L33.6 236.9M238.2 215.7L173 226M320.8 211.7L273.4 219.8M454.2 207.7L424.7 213.8M510.7 207.3L487.2 212.8M567.8 206.7L544.6 212.9M620.4 207.3L603.1 212.7M672.4 208.4L658.3 213.6M723.9 210.1L713 215.1M777.1 212L766.8 218.2M887.4 218.8L884.2 223.9M947.8 222.2L947.2 228.2M1012.8 227.8L1015.1 233.4M1083.7 233.5L1089.9 240.1M683.7 208.6L1094 237.2M558 206.8L644.8 213.3M465.1 207.3L528 212.4M312.4 211.9L357.3 216.2M242.9 215.6L278.7 219.3M171.2 219.8L207 224M99.3 225.1L129 229M21.8 231.1L51.5 235.5" stroke="#7c7c7c" stroke-opacity="0.317" stroke-width="1" fill="none" shape-rendering="crispEdges"/>
<path d="M33.6 236.9L-2 242M173 226L92.9 238.6M273.4 219.8L220.1 229M424.7 213.8L392.4 220.6M487.2 212.8L460.9 219M544.6 212.9L524.2 218.4M603.1 212.7L583.1 218.9M658.3 213.6L641.3 219.8M713 215.1L699.3 221.4M766.8 218.2L759.1 222.8M884.2 223.9L879.5 231.6M947.2 228.2L946.4 237.2M1015.1 233.4L1018.7 241.7M1089.9 240.1L1094 244.4M644.8 213.3L794.5 224.5M1082 246L1094 246.9M528 212.4L599.9 218.2M357.3 216.2L402.3 220.4M278.7 219.3L320.5 223.7M207 224L239.9 227.8M129 229L161.8 233.3M51.5 235.5L81.2 239.9" stroke="#7c7c7c" stroke-opacity="0.357" stroke-width="1" fill="none" shape-rendering="crispEdges"/>
<path d="M92.9 238.6L-2 253.5M220.1 229L152 240.6M392.4 220.6L357 228M460.9 219L431.6 225.9M524.2 218.4L501 224.6M583.1 218.9L565.9 224.2M641.3 219.8L627.2 225.1M699.3 221.4L688.4 226.4M759.1 222.8L748.8 229M879.5 231.6L876.3 236.7M946.4 237.2L945.8 243.2M1018.7 241.7L1022.2 250M794.5 224.5L1082 246M599.9 218.2L707.7 226.9M402.3 220.4L450.2 225M320.5 223.7L359.4 227.8M239.9 227.8L275.7 232M161.8 233.3L194.6 237.6M81.2 239.9L110.9 244.4M-2 248.4L21.7 252.5" stroke="#7c7c7c" stroke-opacity="0.397" stroke-width="1" fill="none" shape-rendering="crispEdges"/>
<path d="M152 240.6L57.2 256.9M357 228L312.9 237.2M431.6 225.9L399.4 233.4M501 224.6L474.8 231.5M565.9 224.2L545.8 230.4M627.2 225.1L610.3 231.3M688.4 226.4L674.8 232.6M748.8 229L738.5 235.2M876.3 236.7L871.6 244.3M945.8 243.2L945.2 249.2M1022.2 250L1025.7 258.3M707.7 226.9L1094 258M450.2 225L510.1 230.7M359.4 227.8L407.1 232.8M275.7 232L317.5 236.9M194.6 237.6L230.3 242.3M110.9 244.4L143.5 249.3M21.7 252.5L51.3 257.7" stroke="#7c7c7c" stroke-opacity="0.436" stroke-width="1" fill="none" shape-rendering="crispEdges"/>
<path d="M57.2 256.9L-2 267M312.9 237.2L259.9 248.2M399.4 233.4L361.3 242.3M474.8 231.5L445.7 239.3M545.8 230.4L520 238.4M610.3 231.3L590.5 238.6M674.8 232.6L658.4 240.1M738.5 235.2L725.6 242.9M871.6 244.3L866.8 252M945.2 249.2L944.3 258.2M1025.7 258.3L1029.3 266.6M510.1 230.7L587.9 238.1M407.1 232.8L463.9 238.7M317.5 236.9L365.3 242.4M230.3 242.3L272 247.7M143.5 249.3L179.2 254.6M51.3 257.7L83.9 263.4" stroke="#7c7c7c" stroke-opacity="0.476" stroke-width="1" fill="none" shape-rendering="crispEdges"/>
<path d="M259.9 248.2L171.6 266.7M361.3 242.3L302.7 256.1M445.7 239.3L402.1 250.9M520 238.4L485.6 249.1M590.5 238.6L565.1 248M658.4 240.1L636.6 250.1M725.6 242.9L710.2 252.2M866.8 252L860.5 262.2M944.3 258.2L943.2 270.2M1029.3 266.6L1035.1 280.5M587.9 238.1L752.6 253.8M463.9 238.7L553.5 248.1M365.3 242.4L431 250.1M272 247.7L325.6 254.7M179.2 254.6L226.7 261.7M83.9 263.4L128.3 271.1M-2 277.6L24.4 283.2" stroke="#7c7c7c" stroke-opacity="0.516" stroke-width="1" fill="none" shape-rendering="crispEdges"/>
<path d="M171.6 266.7L-2 302.9M302.7 256.1L-2 327.5M402.1 250.9L-2 358.8M485.6 249.1L-2 400.3M565.1 248L-2 457.8M636.6 250.1L-2 542.7M710.2 252.2L-2 681M860.5 262.2L446.6 932M943.2 270.2L879.3 932M1035.1 280.5L1094 419M752.6 253.8L1094 286.3M553.5 248.1L1094 304.7M431 250.1L1094 327.2M325.6 254.7L1094 355.4M226.7 261.7L1094 391.5M128.3 271.1L1094 439.8M24.4 283.2L1094 507.3M-2 394.6L1094 777.3M-2 540.7L744.9 932" stroke="#7c7c7c" stroke-opacity="0.555" stroke-width="1" fill="none" shape-rendering="crispEdges"/>
<path d="M28 170.4L-2 172.6M422 158.9L287.6 173M657.4 159.1L601.2 169.7M679.6 159L1094 174.5M292.3 161.5L448.4 169.7M-2 175.3L69.9 181.6" stroke="#adadad" stroke-opacity="0.048" stroke-width="1" fill="none" shape-rendering="crispEdges"/>
<path d="M287.6 173L159.2 186.6M601.2 169.7L562.7 176.9M448.4 169.7L589.5 177M69.9 181.6L138.7 187.6" stroke="#adadad" stroke-opacity="0.097" stroke-width="1" fill="none" shape-rendering="crispEdges"/>
<path d="M159.2 186.6L-2 203.6M562.7 176.9L527.3 183.6M589.5 177L811.7 188.7M1082 202.8L1094 203.5M138.7 187.6L195.6 192.5" stroke="#adadad" stroke-opacity="0.145" stroke-width="1" fill="none" shape-rendering="crispEdges"/>
<path d="M527.3 183.6L491.8 190.3M811.7 188.7L1082 202.8M195.6 192.5L246.5 197" stroke="#adadad" stroke-opacity="0.193" stroke-width="1" fill="none" shape-rendering="crispEdges"/>
<path d="M491.8 190.3L459.3 196.4M246.5 197L294.5 201.2" stroke="#adadad" stroke-opacity="0.242" stroke-width="1" fill="none" shape-rendering="crispEdges"/>
<path d="M459.3 196.4L426.7 202.5M294.5 201.2L339.4 205.1" stroke="#adadad" stroke-opacity="0.290" stroke-width="1" fill="none" shape-rendering="crispEdges"/>
<path d="M426.7 202.5L391.3 209.2M339.4 205.1L387.3 209.3" stroke="#adadad" stroke-opacity="0.338" stroke-width="1" fill="none" shape-rendering="crispEdges"/>
<path d="M391.3 209.2L355.8 215.9M387.3 209.3L435.2 213.5" stroke="#adadad" stroke-opacity="0.387" stroke-width="1" fill="none" shape-rendering="crispEdges"/>
<path d="M355.8 215.9L314.4 223.7M435.2 213.5L492.1 218.4" stroke="#adadad" stroke-opacity="0.435" stroke-width="1" fill="none" shape-rendering="crispEdges"/>
<path d="M314.4 223.7L267.1 232.6M492.1 218.4L555 223.9" stroke="#adadad" stroke-opacity="0.483" stroke-width="1" fill="none" shape-rendering="crispEdges"/>
<path d="M267.1 232.6L207.9 243.7M555 223.9L641.8 231.5" stroke="#adadad" stroke-opacity="0.531" stroke-width="1" fill="none" shape-rendering="crispEdges"/>
<path d="M207.9 243.7L125.1 259.3M641.8 231.5L827.5 247.7M1022.1 264.7L1094 271" stroke="#adadad" stroke-opacity="0.580" stroke-width="1" fill="none" shape-rendering="crispEdges"/>
<path d="M125.1 259.3L-2 283.2M827.5 247.7L1022.1 264.7" stroke="#adadad" stroke-opacity="0.628" stroke-width="1" fill="none" shape-rendering="crispEdges"/>
<line x1="-5" y1="320.7" x2="1097" y2="609.3" stroke="#f83e66" stroke-width="2.2"/>
<linearGradient id="zg" gradientUnits="userSpaceOnUse" x1="959.4" y1="102.2" x2="10.4" y2="935"><stop offset="0" stop-color="#45b1f9"/><stop offset="0.02" stop-color="#3daff9"/><stop offset="0.04" stop-color="#38aef8"/><stop offset="0.06" stop-color="#35adf8"/><stop offset="0.08" stop-color="#33adf8"/><stop offset="0.1" stop-color="#32adf8"/><stop offset="0.13" stop-color="#32acf8"/><stop offset="0.17" stop-color="#31acf8"/><stop offset="0.25" stop-color="#31acf8"/><stop offset="1" stop-color="#31acf8"/></linearGradient>
<polygon points="959,101.8 928.8,128 876,174 770.7,266.3 9.7,934.1 11.2,935.9 772.2,268 877.4,175.6 929.8,129.2 959.8,102.7" fill="url(#zg)"/>
<linearGradient id="yg" gradientUnits="userSpaceOnUse" x1="0" y1="0" x2="0" y2="930"><stop offset="0.0000" stop-color="#ace55a"/><stop offset="0.0161" stop-color="#ace55b"/><stop offset="0.0323" stop-color="#ade55c"/><stop offset="0.0484" stop-color="#ade55d"/><stop offset="0.0645" stop-color="#aee55e"/><stop offset="0.0806" stop-color="#afe65f"/><stop offset="0.0946" stop-color="#afe660"/><stop offset="0.1032" stop-color="#b0e661"/><stop offset="0.1075" stop-color="#b0e661"/><stop offset="0.1097" stop-color="#b0e661"/><stop offset="0.1108" stop-color="#b0e660"/><stop offset="0.1118" stop-color="#afe65e"/><stop offset="0.1140" stop-color="#aee55b"/><stop offset="0.1161" stop-color="#ade557"/><stop offset="0.1194" stop-color="#ace452"/><stop offset="0.1226" stop-color="#abe44e"/><stop offset="0.1269" stop-color="#a9e348"/><stop offset="0.1312" stop-color="#a8e342"/><stop offset="0.1366" stop-color="#a6e23c"/><stop offset="0.1419" stop-color="#a5e236"/><stop offset="0.1484" stop-color="#a4e130"/><stop offset="0.1548" stop-color="#a3e12a"/><stop offset="0.1634" stop-color="#a2e024"/><stop offset="0.1720" stop-color="#a1e01f"/><stop offset="0.1828" stop-color="#a0e01a"/><stop offset="0.1935" stop-color="#a0e016"/><stop offset="0.2065" stop-color="#9fe013"/><stop offset="0.2215" stop-color="#9fe011"/><stop offset="0.2387" stop-color="#9fe00f"/><stop offset="0.2581" stop-color="#9fe00e"/><stop offset="0.2849" stop-color="#9fdf0e"/><stop offset="0.3226" stop-color="#9fdf0d"/><stop offset="0.3763" stop-color="#9fdf0d"/><stop offset="1.0000" stop-color="#9fdf0d"/></linearGradient>
<rect x="545.25" y="0" width="2.4" height="930" fill="url(#yg)"/>
<circle cx="1015.6" cy="42.9" r="8.6" fill="#f0506f" fill-opacity="0.75"/><circle cx="1015.6" cy="42.9" r="7.1" fill="#a63045"/><circle cx="1056.5" cy="37.3" r="8.6" fill="#6aa9ee" fill-opacity="0.75"/><circle cx="1056.5" cy="37.3" r="7.1" fill="#4a80bb"/><circle cx="1042.0" cy="76.3" r="8.6" fill="#96d22c" fill-opacity="0.75"/><circle cx="1042.0" cy="76.3" r="7.1" fill="#6a9a1b"/><line x1="1042.3" y1="50.2" x2="1042.0" y2="23.5" stroke="#87d603" stroke-width="2.6"/><line x1="1042.3" y1="50.2" x2="1068.6" y2="56.7" stroke="#f53352" stroke-width="2.6"/><line x1="1042.3" y1="50.2" x2="1027.6" y2="62.6" stroke="#298cf5" stroke-width="2.6"/><circle cx="1042.0" cy="23.5" r="8.7" fill="#87d603"/><text x="1042.0" y="27.8" text-anchor="middle" font-family="Liberation Sans,sans-serif" font-size="12" fill="#0a0a0a" fill-opacity="0.9">Y</text><circle cx="1068.6" cy="56.7" r="8.7" fill="#f53352"/><text x="1068.6" y="61.0" text-anchor="middle" font-family="Liberation Sans,sans-serif" font-size="12" fill="#0a0a0a" fill-opacity="0.9">X</text><circle cx="1027.6" cy="62.6" r="8.7" fill="#298cf5"/><text x="1027.6" y="66.9" text-anchor="middle" font-family="Liberation Sans,sans-serif" font-size="12" fill="#0a0a0a" fill-opacity="0.9">Z</text>
</svg><div class="a" style="left:10px;top:10px;width:104px;height:29px;border-radius:3px;background:rgba(33,40,60,0.4)"></div><div class="a" style="left:0;top:0;width:100%;height:100%;border:2px solid rgba(112,186,250,0.55)"></div></div>
<div class="pn" style="left:373px;top:1050px;width:1092px;height:41px;border-radius:3px"></div>
<div class="a" style="left:383px;top:1067px;width:8px;height:8px;border-radius:50%;background:#ff786b"></div>
<div class="a" style="left:458px;top:1067px;width:8px;height:8px;border-radius:50%;background:#ffde66"></div>
<div class="bt" style="left:1435px;top:7px;width:224px;height:34px;border-radius:4px"></div>
<div class="tb" style="left:1469px;top:49px;width:293px"><div class="tab" style="left:0;width:85px"></div></div>
<div class="pn" style="left:1469px;top:77px;width:293px;height:1014px;border-radius:0 0 3px 3px"></div>
<div class="a" style="left:1473px;top:113px;width:253px;height:31px;border-radius:3px;background:#2f3541"></div>
<div class="le" style="left:1473px;top:148px;width:253px;height:31px;background:#2f3541;border-bottom-color:#232832"></div>
<div class="tree" style="left:1473px;top:183px;width:285px;height:904px"></div>
<svg class="i" style="left:17px;top:90px;width:16px;height:16px;" viewBox="0 0 16 16" ><path d="M7 1v6H1v2h6v6h2V9h6V7H9V1z" fill="#e0e0e0" /></svg>
<svg class="i" style="left:49px;top:90px;width:16px;height:16px;" viewBox="0 0 16 16" ><circle cx="5" cy="11" r="3.1" fill="none" stroke="#e0e0e0" stroke-width="1.9"/><circle cx="11" cy="5" r="3.1" fill="none" stroke="#e0e0e0" stroke-width="1.9"/><path d="M5.2 10.8L10.8 5.2" stroke="#363d4a" stroke-width="4.2" stroke-linecap="round"/><path d="M5.2 10.8L10.8 5.2" stroke="#e0e0e0" stroke-width="1.9" stroke-linecap="round"/></svg>
<svg class="i" style="left:311px;top:90px;width:16px;height:16px;" viewBox="0 0 16 16" ><circle cx="6" cy="6" r="4" fill="none" stroke="#e0e0e0" stroke-width="2"/><path d="M9 9l5 5" stroke="#e0e0e0" stroke-width="2" fill="none"/></svg>
<svg class="i" style="left:343px;top:90px;width:16px;height:16px;" viewBox="0 0 16 16" ><circle cx="8" cy="2" r="1.8" fill="#e0e0e0"/><circle cx="8" cy="8" r="1.8" fill="#e0e0e0"/><circle cx="8" cy="14" r="1.8" fill="#e0e0e0"/></svg>
<svg class="i" style="left:353px;top:55px;width:16px;height:16px;opacity:0.45;" viewBox="0 0 16 16" ><circle cx="8" cy="2" r="1.8" fill="#e0e0e0"/><circle cx="8" cy="8" r="1.8" fill="#e0e0e0"/><circle cx="8" cy="14" r="1.8" fill="#e0e0e0"/></svg>
<svg class="i" style="left:343px;top:124.5px;width:16px;height:16px;" viewBox="0 0 16 16" ><path d="M8.00 1.50L10.06 5.67L14.66 6.34L11.33 9.58L12.11 14.16L8.00 12.00L3.89 14.16L4.67 9.58L1.34 6.34L5.94 5.67z" fill="#e0e0e0" stroke="#e0e0e0" stroke-width="0.7" stroke-linejoin="round"/></svg>
<svg class="i" style="left:17px;top:158.3px;width:16px;height:16px;" viewBox="0 0 16 16" ><circle cx="8" cy="8" r="5" fill="none" stroke="#8da5f3" stroke-width="2"/></svg>
<svg class="i" style="left:17px;top:193.3px;width:16px;height:16px;" viewBox="0 0 16 16" ><circle cx="8" cy="8" r="5" fill="none" stroke="#fc7f7f" stroke-width="2"/></svg>
<svg class="i" style="left:17px;top:228.3px;width:16px;height:16px;" viewBox="0 0 16 16" ><circle cx="8" cy="8" r="5" fill="none" stroke="#8eef97" stroke-width="2"/></svg>
<svg class="i" style="left:17px;top:263.5px;width:16px;height:16px;" viewBox="0 0 16 16" ><path d="M7 1v6H1v2h6v6h2V9h6V7H9V1z" fill="#e0e0e0" /></svg>
<svg class="i" style="left:353px;top:578px;width:16px;height:16px;opacity:0.45;" viewBox="0 0 16 16" ><circle cx="8" cy="2" r="1.8" fill="#e0e0e0"/><circle cx="8" cy="8" r="1.8" fill="#e0e0e0"/><circle cx="8" cy="14" r="1.8" fill="#e0e0e0"/></svg>
<svg class="i" style="left:13.2px;top:613px;width:16px;height:16px;" viewBox="0 0 16 16" ><path d="M10.75 1L5.25 8L10.75 15" fill="none" stroke="#e0e0e0" stroke-width="2" stroke-linejoin="miter"/></svg>
<svg class="i" style="left:32.8px;top:613px;width:16px;height:16px;opacity:0.42;" viewBox="0 0 16 16" ><path d="M5.25 1L10.75 8L5.25 15" fill="none" stroke="#e0e0e0" stroke-width="2" stroke-linejoin="miter"/></svg>
<svg class="i" style="left:343px;top:613px;width:16px;height:16px;" viewBox="0 0 16 16" ><rect x="0.900" y="0.900" width="14.200" height="14.200" rx="1.600" fill="none" stroke="#e0e0e0" stroke-width="1.700"/><path d="M1 1.500h14v2.600H1z" fill="#e0e0e0" /></svg>
<svg class="i" style="left:311px;top:648px;width:16px;height:16px;" viewBox="0 0 16 16" ><circle cx="6" cy="6" r="4" fill="none" stroke="#e0e0e0" stroke-width="2"/><path d="M9 9l5 5" stroke="#e0e0e0" stroke-width="2" fill="none"/></svg>
<svg class="i" style="left:343px;top:648px;width:16px;height:16px;" viewBox="0 0 16 16" ><path d="M4 3v10" fill="none" stroke="#e0e0e0" stroke-width="2" /><path d="M4 .8 7 4.500H1zM4 15.200 1 11.500h6z" fill="#e0e0e0" /><path d="M9 2h6v2H9zM9 7h4v2H9zM9 12h2v2H9z" fill="#e0e0e0" /></svg>
<svg class="i" style="left:31px;top:686.4px;width:16px;height:16px;" viewBox="0 0 16 16" ><path d="M8.00 1.50L10.06 5.67L14.66 6.34L11.33 9.58L12.11 14.16L8.00 12.00L3.89 14.16L4.67 9.58L1.34 6.34L5.94 5.67z" fill="#e0e0e0" stroke="#e0e0e0" stroke-width="0.7" stroke-linejoin="round"/></svg>
<svg class="i" style="left:13.3px;top:715.2px;width:16px;height:16px;opacity:0.55;" viewBox="0 0 16 16" ><path d="M6 4.500L9.500 8 6 11.500" fill="none" stroke="#e0e0e0" stroke-width="2" /></svg>
<svg class="i" style="left:31px;top:715px;width:16px;height:16px;" viewBox="0 0 16 16" ><path d="M2 2a1 1 0 0 0-1 1v10a1 1 0 0 0 1 1h12a1 1 0 0 0 1-1V5a1 1 0 0 0-1-1H9L7.500 2z" fill="#7fb4e2" /></svg>
<svg class="i" style="left:575px;top:16px;width:16px;height:16px;" viewBox="0 0 16 16" ><path d="M3.500 3H11V1l4.200 3L11 7V5H5.500v6h2.800l-3.800 4.400L.7 11h2.800z" fill="#e0e0e0" /></svg>
<svg class="i" style="left:632px;top:16px;width:16px;height:16px;" viewBox="0 0 16 16" ><path d="M4 4v8.2h8" fill="none" stroke="#70bafa" stroke-width="2"/><path d="M4.6 11.4L11.5 4.5" fill="none" stroke="#70bafa" stroke-width="2"/><path d="M4 .6 1 5h6z" fill="#70bafa" /><path d="M15.4 12.2 11 9.2v6z" fill="#70bafa" /><path d="M14.4 1.6H8.8l5.6 5.6z" fill="#70bafa" /></svg>
<svg class="i" style="left:689px;top:16px;width:16px;height:16px;" viewBox="0 0 16 16" ><path d="M6 1a2 2 0 0 0-2 2v9H1v1a2 2 0 0 0 2 2h7.2a2 2 0 0 0 2-2V5.2H15V3a2 2 0 0 0-2-2z" fill="#e0e0e0" /><path d="M12.2 3a.9.9 0 0 1 1.8 0v1.2h-1.8z" fill="#b9bbbf" /><path d="M2 13h6.5v.2a1 1 0 0 0 .5.8H3a1 1 0 0 1-1-1z" fill="#b9bbbf" /></svg>
<svg class="i" style="left:772px;top:16px;width:16px;height:16px;" viewBox="0 0 16 16" ><circle cx="9" cy="4" r="3" fill="#e0e0e0"/><path d="M7.900 6.500h2.200v5H7.900z" fill="#e0e0e0" /><path d="M1.600 11.100h12.700a.7.700 0 0 1 .7.700V15H.9v-3.200a.7.700 0 0 1 .7-.7z" fill="#e0e0e0" /><path d="M3 11.200v-1a1.350 1.350 0 0 1 2.700 0v1z" fill="#e0e0e0" /></svg>
<svg class="i" style="left:855px;top:16px;width:16px;height:16px;" viewBox="0 0 16 16" ><path d="M7 1h2v6.2h3.2L8 11.4 3.8 7.2H7z" fill="#e0e0e0" /><path d="M1 9.5h2V13h10V9.5h2V15H1z" fill="#e0e0e0" /></svg>
<svg class="i" style="left:1442px;top:16px;width:16px;height:16px;" viewBox="0 0 16 16" ><path d="M4 12a1 1 0 0 0 1.555.832l6-4a1 1 0 0 0 0-1.664l-6-4A1 1 0 0 0 4 4z" fill="#e0e0e0" /></svg>
<svg class="i" style="left:1475px;top:16px;width:16px;height:16px;opacity:0.4;" viewBox="0 0 16 16" ><path d="M4 3a1 1 0 0 0-1 1v8a1 1 0 0 0 1 1h2a1 1 0 0 0 1-1V4a1 1 0 0 0-1-1zm6 0a1 1 0 0 0-1 1v8a1 1 0 0 0 1 1h2a1 1 0 0 0 1-1V4a1 1 0 0 0-1-1z" fill="#e0e0e0" /></svg>
<svg class="i" style="left:1507px;top:16px;width:16px;height:16px;opacity:0.4;" viewBox="0 0 16 16" ><rect x="3" y="3" width="10" height="10" rx="1" fill="#e0e0e0"/></svg>
<svg class="i" style="left:1539px;top:16px;width:16px;height:16px;opacity:0.4;" viewBox="0 0 16 16" ><path d="M3 2.100h10A2 2 0 0 1 15 4.100v4.500A2 2 0 0 1 13 10.600H3A2 2 0 0 1 1 8.600v-4.500A2 2 0 0 1 3 2.100zM5.500 4.400v4.800l4.700-2.400z" fill="#e0e0e0" fill-rule="evenodd"/><path d="M7 10.600h2v1.700h3.900v2H3.100v-2H7z" fill="#e0e0e0" /></svg>
<svg class="i" style="left:1571px;top:16px;width:16px;height:16px;" viewBox="0 0 16 16" ><path d="M.8 5.200L15.100 3" stroke="#e0e0e0" stroke-width="2.100" stroke-dasharray="2.650 1.200" fill="none"/><path d="M1 6.900h14.200V15H2.500a1.500 1.500 0 0 1-1.500-1.500zM6 8.900v4.900l4.300-2.500z" fill="#e0e0e0" fill-rule="evenodd"/></svg>
<svg class="i" style="left:1603px;top:16px;width:16px;height:16px;" viewBox="0 0 16 16" ><path d="M.8 5.200L15.100 3" stroke="#e0e0e0" stroke-width="2.100" stroke-dasharray="2.650 1.200" fill="none"/><path d="M1 6.900h14.200V15H2.500a1.500 1.500 0 0 1-1.500-1.500zM3.900 8.600v5.200H12V9.600H7.800l-.9-1z" fill="#e0e0e0" fill-rule="evenodd"/></svg>
<svg class="i" style="left:1635px;top:16px;width:16px;height:16px;opacity:0.62;" viewBox="0 0 16 16" ><path d="M7.900 2.100a5.800 5.800 0 1 0 0 11.600 5.800 5.800 0 0 0 0-11.600zM11.91 9.72a.85.85 0 1 0-1.700 0 .85.85 0 0 0 1.700 0zM8.75 11.55a.85.85 0 1 0-1.700 0 .85.85 0 0 0 1.700 0zM5.59 9.72a.85.85 0 1 0-1.700 0 .85.85 0 0 0 1.700 0zM5.59 6.08a.85.85 0 1 0-1.700 0 .85.85 0 0 0 1.700 0zM8.75 4.25a.85.85 0 1 0-1.700 0 .85.85 0 0 0 1.700 0zM11.91 6.07a.85.85 0 1 0-1.700 0 .85.85 0 0 0 1.700 0z" fill="#e0e0e0" fill-rule="evenodd"/><path d="M13 9.500c1 1.500.4 4 1.800 5.600" stroke="#e0e0e0" stroke-width="1.700" fill="none"/></svg>
<svg class="i" style="left:1740px;top:16px;width:16px;height:16px;" viewBox="0 0 16 16" ><path d="M3.300 5.600l4.700 4.700L12.700 5.600" fill="none" stroke="#66a03c" stroke-width="2" /></svg>
<svg class="i" style="left:445px;top:55px;width:16px;height:16px;" viewBox="0 0 16 16" ><path d="M3 3l10 10M13 3L3 13" fill="none" stroke="#e0e0e0" stroke-width="2" /></svg>
<svg class="i" style="left:482px;top:55px;width:16px;height:16px;" viewBox="0 0 16 16" ><path d="M7 1v6H1v2h6v6h2V9h6V7H9V1z" fill="#8a8c90" /></svg>
<svg class="i" style="left:1443px;top:55px;width:16px;height:16px;" viewBox="0 0 16 16" ><path d="M1 1h5L4.2 2.8l2.5 2.5-1.4 1.4-2.5-2.5L1 6z" fill="#e0e0e0" transform="rotate(0 8 8)"/><path d="M1 1h5L4.2 2.8l2.5 2.5-1.4 1.4-2.5-2.5L1 6z" fill="#e0e0e0" transform="rotate(90 8 8)"/><path d="M1 1h5L4.2 2.8l2.5 2.5-1.4 1.4-2.5-2.5L1 6z" fill="#e0e0e0" transform="rotate(180 8 8)"/><path d="M1 1h5L4.2 2.8l2.5 2.5-1.4 1.4-2.5-2.5L1 6z" fill="#e0e0e0" transform="rotate(270 8 8)"/></svg>
<svg class="i" style="left:383px;top:88px;width:16px;height:16px;" viewBox="0 0 16 16" ><path d="M1.900 1.600L6 13.400l2-3.500 2.800 2.900 1.900-1.900-2.900-2.800 3.700-2.100z" fill="#70bafa" /></svg>
<svg class="i" style="left:423px;top:88px;width:16px;height:16px;" viewBox="0 0 16 16" ><path d="M8 1l2.900 3.400H5.100z" fill="#e0e0e0" stroke="#000" stroke-opacity="0.38" stroke-width="2" stroke-linejoin="round" paint-order="stroke"/><path d="M1 8l3.400-2.900v5.800z" fill="#e0e0e0" stroke="#000" stroke-opacity="0.38" stroke-width="2" stroke-linejoin="round" paint-order="stroke"/><path d="M15 8l-3.400 2.900V5.100z" fill="#e0e0e0" stroke="#000" stroke-opacity="0.38" stroke-width="2" stroke-linejoin="round" paint-order="stroke"/><path d="M8 15l-2.900-3.400h5.800z" fill="#e0e0e0" stroke="#000" stroke-opacity="0.38" stroke-width="2" stroke-linejoin="round" paint-order="stroke"/><circle cx="8" cy="8" r="2.200" fill="#e0e0e0" stroke="#000" stroke-opacity="0.38" stroke-width="2" stroke-linejoin="round" paint-order="stroke"/></svg>
<svg class="i" style="left:455px;top:88px;width:16px;height:16px;" viewBox="0 0 16 16" ><path d="M12.460 12A6 6 0 1 0 3.600 12.100" fill="none" stroke="#000" stroke-opacity="0.38" stroke-width="4"/><path d="M6.800 10.400V15.100H1.900z" fill="#e0e0e0" stroke="#000" stroke-opacity="0.38" stroke-width="2" stroke-linejoin="round" paint-order="stroke"/><path d="M12.460 12A6 6 0 1 0 3.600 12.100" fill="none" stroke="#e0e0e0" stroke-width="2" /><path d="M6.800 10.400V15.100H1.900z" fill="#e0e0e0" /><circle cx="8" cy="8" r="2.100" fill="#e0e0e0" stroke="#000" stroke-opacity="0.38" stroke-width="2" stroke-linejoin="round" paint-order="stroke"/></svg>
<svg class="i" style="left:487px;top:88px;width:16px;height:16px;" viewBox="0 0 16 16" ><path d="M9 1h6v6h-2V4.400l-2.100 2.100-1.400-1.400L11.600 3H9z" fill="#e0e0e0" stroke="#000" stroke-opacity="0.38" stroke-width="2" stroke-linejoin="round" paint-order="stroke"/><path d="M7 15H1V9h2v2.600l2.100-2.100 1.400 1.400L4.400 13H7z" fill="#e0e0e0" stroke="#000" stroke-opacity="0.38" stroke-width="2" stroke-linejoin="round" paint-order="stroke"/><circle cx="8" cy="8" r="2.100" fill="#e0e0e0" stroke="#000" stroke-opacity="0.38" stroke-width="2" stroke-linejoin="round" paint-order="stroke"/></svg>
<svg class="i" style="left:527px;top:88px;width:16px;height:16px;" viewBox="0 0 16 16" ><path d="M1 1h11v14H1z" fill="#e0e0e0" stroke="#000" stroke-opacity="0.38" stroke-width="2" stroke-linejoin="round" paint-order="stroke"/><path d="M3 3.300h7v1.500H3zM3 7.200h7v1.500H3zM3 11.200h7v1.500H3z" fill="#1f2531" /><path d="M7.800 7.900L11.200 16l.9-2.600 1.800 1.900 1.300-1.300-1.800-1.800 2.500-.9z" fill="#d8d8d8" stroke="#000" stroke-opacity="0.38" stroke-width="2" stroke-linejoin="round" paint-order="stroke"/></svg>
<svg class="i" style="left:559px;top:88px;width:16px;height:16px;opacity:0.4;" viewBox="0 0 16 16" ><path d="M8 1a5 5 0 0 0-5 5v2H2v7h12V8h-1V6a5 5 0 0 0-5-5zm0 2a3 3 0 0 1 3 3v2H5V6a3 3 0 0 1 3-3zM7 10h2v3H7z" fill="#e0e0e0" /></svg>
<svg class="i" style="left:591px;top:88px;width:16px;height:16px;opacity:0.4;" viewBox="0 0 16 16" ><path d="M1 1v2h2V1zm12 0v2h2V1zM1 13v2h2v-2zm12 0v2h2v-2z" fill="#e0e0e0" /><path d="M2 7h7v7H2z" fill="#e0e0e0" opacity="0.5"/><path d="M7 2v5h2V4h3v3H9v2h5V2z" fill="#e0e0e0" opacity="0.6"/></svg>
<svg class="i" style="left:623px;top:88px;width:16px;height:16px;" viewBox="0 0 16 16" ><path d="M1.050 1.050V14.900H14.900zM3.800 8.500V12H7.300z" fill="#e0e0e0" fill-rule="evenodd"/></svg>
<svg class="i" style="left:663px;top:88px;width:16px;height:16px;" viewBox="0 0 16 16" ><path d="M8 1.050 1.200 4.900v6.500L8 14.900l6.800-3.500V4.900z" fill="#e0e0e0" /><path d="M8 3.300 11 4.800 8 6.300 5 4.800z" fill="#2a303c" /><path d="M2.900 7.300 6.800 9.300v3L2.900 10.600z" fill="#2a303c" /></svg>
<svg class="i" style="left:695px;top:88px;width:16px;height:16px;" viewBox="0 0 16 16" ><path d="M2.900 3h2.100v2.100H2.900zM8.800 3H11v2.100H8.800zM2.900 8.900h2.100V11H2.900z" fill="#e0e0e0" /><path d="M6.700 14.900V11.500a4.200 4.200 0 0 1 8.400 0v3.400h-2.200V11.500a2 2 0 0 0-4 0v3.400z" fill="#bfc3ca" /><path d="M6.700 13.300h2.200v1.600H6.700zm6.200 0h2.200v1.600h-2.200z" fill="#ffffff" /></svg>
<svg class="i" style="left:735px;top:88px;width:16px;height:16px;" viewBox="0 0 16 16" ><circle cx="8" cy="8" r="3.1" fill="#70bafa"/><path d="M8 .8v2.4M8 12.8v2.4M.8 8h2.4M12.8 8h2.4" stroke="#70bafa" stroke-width="2" fill="none"/><path d="M4 2.7l1.300 1.300-1.300 1.300-1.300-1.300z" fill="#70bafa"/><path d="M12 2.7l1.300 1.300-1.300 1.300-1.300-1.300z" fill="#70bafa"/><path d="M4 10.7l1.300 1.300-1.300 1.300-1.300-1.300z" fill="#70bafa"/><path d="M12 10.7l1.300 1.300-1.300 1.300-1.300-1.300z" fill="#70bafa"/></svg>
<svg class="i" style="left:767px;top:88px;width:16px;height:16px;" viewBox="0 0 16 16" ><circle cx="8" cy="8" r="6" fill="none" stroke="#70bafa" stroke-width="2"/><ellipse cx="8" cy="8" rx="2.700" ry="6" fill="none" stroke="#70bafa" stroke-width="1.200"/><path d="M2.500 5.800h11M2.500 10.200h11" stroke="#70bafa" stroke-width="1.100" fill="none"/></svg>
<svg class="i" style="left:799px;top:88px;width:16px;height:16px;" viewBox="0 0 16 16" ><circle cx="8" cy="2" r="1.8" fill="#e0e0e0"/><circle cx="8" cy="8" r="1.8" fill="#e0e0e0"/><circle cx="8" cy="14" r="1.8" fill="#e0e0e0"/></svg>
<svg class="i" style="left:387px;top:132.5px;width:16px;height:16px;opacity:0.9;" viewBox="0 0 16 16" ><circle cx="8" cy="2" r="1.8" fill="#e0e0e0"/><circle cx="8" cy="8" r="1.8" fill="#e0e0e0"/><circle cx="8" cy="14" r="1.8" fill="#e0e0e0"/></svg>
<svg class="i" style="left:1746px;top:55px;width:16px;height:16px;opacity:0.45;" viewBox="0 0 16 16" ><circle cx="8" cy="2" r="1.8" fill="#e0e0e0"/><circle cx="8" cy="8" r="1.8" fill="#e0e0e0"/><circle cx="8" cy="14" r="1.8" fill="#e0e0e0"/></svg>
<svg class="i" style="left:1479px;top:88px;width:16px;height:16px;" viewBox="0 0 16 16" ><path d="M2 1h8v4.500h4V7H9v2H7v4h2v2H2z" fill="#e0e0e0" /><path d="M10.300 1l3.900 3.900h-3.900z" fill="#ffffff" /><path d="M13 13h2v-2h-2V9h-2v2H9v2h2v2h2z" fill="#5fff97" /></svg>
<svg class="i" style="left:1511px;top:88px;width:16px;height:16px;" viewBox="0 0 16 16" ><path d="M2 13V3.500a1 1 0 0 1 1-1h3l1.500 2H12a1 1 0 0 1 1 1V7" fill="none" stroke="#e0e0e0" stroke-width="1.5" /><path d="M4.300 7H15.500l-1.900 6.500a.8.8 0 0 1-.8.600H1.600z" fill="#e0e0e0" /></svg>
<svg class="i" style="left:1543px;top:88px;width:16px;height:16px;opacity:0.4;" viewBox="0 0 16 16" ><path d="M2 1a1 1 0 0 0-1 1v12a1 1 0 0 0 1 1h12a1 1 0 0 0 1-1V4l-3-3zM4 1h6v4.500H4zM8 9a2 2 0 0 1 0 4 2 2 0 0 1 0-4z" fill="#e0e0e0" fill-rule="evenodd"/><path d="M5 1h1.600v3.500H5z" fill="#e0e0e0" /></svg>
<svg class="i" style="left:1575px;top:88px;width:16px;height:16px;" viewBox="0 0 16 16" ><circle cx="8" cy="2" r="1.8" fill="#e0e0e0"/><circle cx="8" cy="8" r="1.8" fill="#e0e0e0"/><circle cx="8" cy="14" r="1.8" fill="#e0e0e0"/></svg>
<svg class="i" style="left:1684px;top:88px;width:16px;height:16px;opacity:0.42;" viewBox="0 0 16 16" ><path d="M10.4 1.2000000000000002L5.6 8L10.4 14.8" fill="none" stroke="#e0e0e0" stroke-width="1.9" stroke-linejoin="miter"/></svg>
<svg class="i" style="left:1708px;top:88px;width:16px;height:16px;opacity:0.42;" viewBox="0 0 16 16" ><path d="M5.6 1.2000000000000002L10.4 8L5.6 14.8" fill="none" stroke="#e0e0e0" stroke-width="1.9" stroke-linejoin="miter"/></svg>
<svg class="i" style="left:1737px;top:88px;width:16px;height:16px;opacity:0.42;" viewBox="0 0 16 16" ><path d="M3.300 9.700A5.300 5.300 0 1 0 4.300 4.700" fill="none" stroke="#e0e0e0" stroke-width="2" /><path d="M.7 7.700h5L3.200 11z" fill="#e0e0e0" /><path d="M8.500 5v3.600h2.700" fill="none" stroke="#e0e0e0" stroke-width="1.6" /></svg>
<svg class="i" style="left:1735.5px;top:120.3px;width:16px;height:16px;opacity:0.42;" viewBox="0 0 16 16" ><circle cx="9.900" cy="3.900" r="3.300" fill="none" stroke="#e0e0e0" stroke-width="1.700"/><path d="M7.600 6.300L4.800 9" stroke="#e0e0e0" stroke-width="1.900" fill="none"/><text x="8" y="15.400" text-anchor="middle" font-family="Liberation Sans,sans-serif" font-weight="700" font-size="7.500" fill="#e0e0e0" stroke="#e0e0e0" stroke-width="0.350" textLength="14.800" lengthAdjust="spacingAndGlyphs">DOC</text></svg>
<svg class="i" style="left:1704px;top:155.5px;width:16px;height:16px;opacity:0.5;" viewBox="0 0 16 16" ><circle cx="6" cy="6" r="4" fill="none" stroke="#e0e0e0" stroke-width="2"/><path d="M9 9l5 5" stroke="#e0e0e0" stroke-width="2" fill="none"/></svg>
<svg class="i" style="left:1736px;top:155px;width:16px;height:16px;opacity:0.55;" viewBox="0 0 16 16" ><path d="M4 2.500V9" fill="none" stroke="#e0e0e0" stroke-width="1.3" /><path d="M4 .8 5.300 3H2.700z" fill="#e0e0e0" /><path d="M2.400 8.500h3.200v4.700a1.600 1.600 0 0 1-3.200 0z" fill="#e0e0e0" /><path d="M11.500 6.500V15" fill="none" stroke="#e0e0e0" stroke-width="2" /><path d="M9.300 1.300v3a2.200 2.200 0 0 0 4.400 0v-3" fill="none" stroke="#e0e0e0" stroke-width="1.7" /></svg>
<svg class="i" style="left:1313.8px;top:1063.2px;width:16px;height:16px;opacity:0.92;" viewBox="0 0 16 16" ><g transform="rotate(18 8 8)"><path d="M8 1.500a4.600 4.600 0 0 0-4.600 4.600v3.500L1.500 12.500h13L12.600 9.600V6.100A4.600 4.600 0 0 0 8 1.500zM6.300 13.300a1.700 1.700 0 0 0 3.400 0z" fill="#e0e0e0" /></g></svg>
<div id="txt">
<span class="t" id="t0" style="left:11.00px;top:14.86px;font-size:16px;line-height:19.20px;color:#cdcfd2;letter-spacing:-0.469px;">Scene</span>
<span class="t" id="t1" style="left:73.00px;top:14.86px;font-size:16px;line-height:19.20px;color:#cdcfd2;letter-spacing:0.241px;">Project</span>
<span class="t" id="t2" style="left:142.75px;top:14.86px;font-size:16px;line-height:19.20px;color:#cdcfd2;letter-spacing:0.525px;">Debug</span>
<span class="t" id="t3" style="left:210.50px;top:14.86px;font-size:16px;line-height:19.20px;color:#cdcfd2;letter-spacing:0.340px;">Editor</span>
<span class="t" id="t4" style="left:273.25px;top:14.86px;font-size:16px;line-height:19.20px;color:#cdcfd2;letter-spacing:0.362px;">Help</span>
<span class="t" id="t5" style="left:595.50px;top:14.86px;font-size:16px;line-height:19.20px;color:#d3d5d8;font-weight:700;letter-spacing:-0.468px;">2D</span>
<span class="t" id="t6" style="left:653.00px;top:14.86px;font-size:16px;line-height:19.20px;color:#70bafa;font-weight:700;letter-spacing:-0.968px;">3D</span>
<span class="t" id="t7" style="left:709.50px;top:14.86px;font-size:16px;line-height:19.20px;color:#d3d5d8;font-weight:700;letter-spacing:0.031px;">Script</span>
<span class="t" id="t8" style="left:792.50px;top:14.86px;font-size:16px;line-height:19.20px;color:#d3d5d8;font-weight:700;letter-spacing:0.339px;">Game</span>
<span class="t" id="t9" style="left:875.50px;top:14.86px;font-size:16px;line-height:19.20px;color:#d3d5d8;font-weight:700;letter-spacing:-0.154px;">AssetLib</span>
<span class="t" id="t10" style="left:1669.90px;top:15.75px;font-size:14px;line-height:16.80px;color:#66a03c;font-weight:700;letter-spacing:0.185px;">Forward+</span>
<span class="t" id="t11" style="left:18.00px;top:54.75px;font-size:14px;line-height:16.80px;color:#cdcfd2;letter-spacing:-0.302px;">Scene</span>
<span class="t" id="t12" style="left:79.00px;top:54.75px;font-size:14px;line-height:16.80px;color:#80858d;letter-spacing:1.164px;">Import</span>
<span class="t" id="t13" style="left:384.25px;top:54.75px;font-size:14px;line-height:16.80px;color:#cdcfd2;letter-spacing:0.722px;">[empty]</span>
<span class="t" id="t14" style="left:1480.25px;top:54.75px;font-size:14px;line-height:16.80px;color:#cdcfd2;letter-spacing:0.519px;">Inspector</span>
<span class="t" id="t15" style="left:1565.75px;top:54.75px;font-size:14px;line-height:16.80px;color:#80858d;letter-spacing:0.339px;">Node</span>
<span class="t" id="t16" style="left:1623.75px;top:54.75px;font-size:14px;line-height:16.80px;color:#80858d;letter-spacing:0.447px;">History</span>
<span class="t" id="t17" style="left:81.00px;top:89.75px;font-size:14px;line-height:16.80px;color:#8b8f96;letter-spacing:0.395px;">Filter: name, t:type, g:group</span>
<span class="t" id="t18" style="left:15.50px;top:123.75px;font-size:14px;line-height:16.80px;color:#cdcfd2;font-weight:700;letter-spacing:0.224px;">Create Root Node:</span>
<span class="t" id="t19" style="left:167.25px;top:157.75px;font-size:14px;line-height:16.80px;color:#cdcfd2;letter-spacing:-0.177px;">2D Scene</span>
<span class="t" id="t20" style="left:167.25px;top:192.75px;font-size:14px;line-height:16.80px;color:#cdcfd2;letter-spacing:-0.177px;">3D Scene</span>
<span class="t" id="t21" style="left:151.25px;top:227.75px;font-size:14px;line-height:16.80px;color:#cdcfd2;letter-spacing:0.390px;">User Interface</span>
<span class="t" id="t22" style="left:159.50px;top:262.75px;font-size:14px;line-height:16.80px;color:#cdcfd2;letter-spacing:0.486px;">Other Node</span>
<span class="t" id="t23" style="left:18.00px;top:577.75px;font-size:14px;line-height:16.80px;color:#cdcfd2;letter-spacing:0.028px;">FileSystem</span>
<span class="t" id="t24" style="left:61.25px;top:612.75px;font-size:14px;line-height:16.80px;color:#cdcfd2;letter-spacing:0.330px;">res://scenes/characters/player.tscn</span>
<span class="t" id="t25" style="left:17.25px;top:647.75px;font-size:14px;line-height:16.80px;color:#8b8f96;letter-spacing:0.062px;">Filter Files</span>
<span class="t" id="t26" style="left:53.25px;top:685.75px;font-size:14px;line-height:16.80px;color:#cdcfd2;letter-spacing:0.170px;">Favorites:</span>
<span class="t" id="t27" style="left:53.25px;top:714.75px;font-size:14px;line-height:16.80px;color:#cdcfd2;letter-spacing:0.476px;">res://</span>
<span class="t" id="t28" style="left:407.50px;top:131.75px;font-size:14px;line-height:16.80px;color:rgba(235,237,240,0.78);letter-spacing:0.159px;">Perspective</span>
<span class="t" id="t29" style="left:839.25px;top:87.75px;font-size:14px;line-height:16.80px;color:#cdcfd2;letter-spacing:0.466px;">Transform</span>
<span class="t" id="t30" style="left:923.00px;top:87.75px;font-size:14px;line-height:16.80px;color:#cdcfd2;letter-spacing:0.298px;">View</span>
<span class="t" id="t31" style="left:1479.50px;top:154.75px;font-size:14px;line-height:16.80px;color:#8b8f96;letter-spacing:0.324px;">Filter Properties</span>
<span class="t" id="t32" style="left:395.50px;top:1062.75px;font-size:14px;line-height:16.80px;color:#cdcfd2;letter-spacing:0.892px;">Output</span>
<span class="t" id="t33" style="left:470.75px;top:1062.75px;font-size:14px;line-height:16.80px;color:#f0d264;letter-spacing:0.288px;">Debugger (14)</span>
<span class="t" id="t34" style="left:581.50px;top:1062.75px;font-size:14px;line-height:16.80px;color:#cdcfd2;letter-spacing:0.359px;">Audio</span>
<span class="t" id="t35" style="left:636.50px;top:1062.75px;font-size:14px;line-height:16.80px;color:#cdcfd2;letter-spacing:0.623px;">Animation</span>
<span class="t" id="t36" style="left:720.50px;top:1062.75px;font-size:14px;line-height:16.80px;color:#cdcfd2;letter-spacing:0.262px;">Shader Editor</span>
<span class="t" id="t37" style="left:1339.00px;top:1062.75px;font-size:14px;line-height:16.80px;color:#8c9098;letter-spacing:0.356px;">4.4.1.stable.mono</span>
</div>
</body></html>
